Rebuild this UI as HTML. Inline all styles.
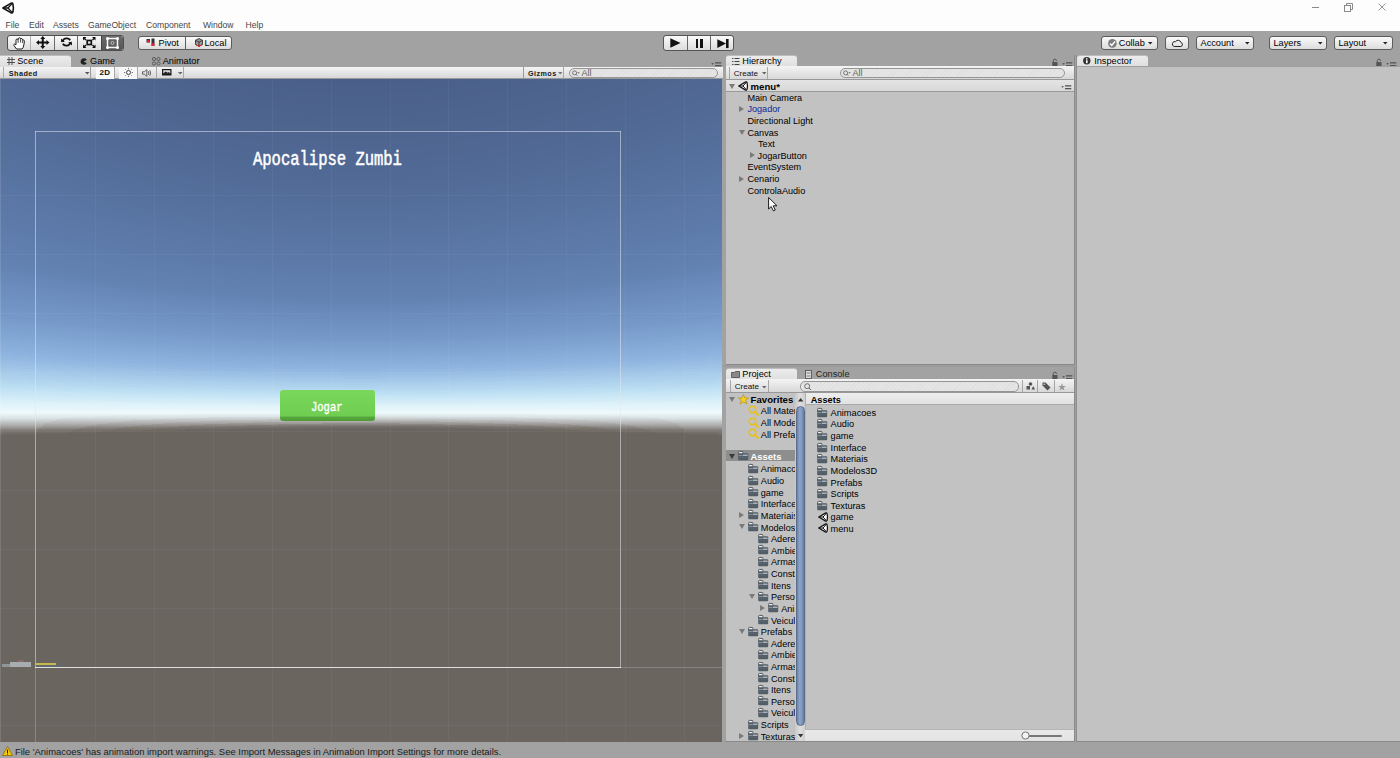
<!DOCTYPE html>
<html><head><meta charset="utf-8">
<style>
*{margin:0;padding:0;box-sizing:border-box}
html,body{width:1400px;height:758px;overflow:hidden;background:#a2a2a2;font-family:"Liberation Sans",sans-serif;font-size:9px;color:#000;position:relative}
.a{position:absolute}
svg.a{overflow:visible}
.t{position:absolute;white-space:nowrap}
.btn{position:absolute;border:1px solid #5c5c5c;border-radius:3px;background:linear-gradient(#fafafa,#dcdcdc)}
.tab{position:absolute;background:linear-gradient(#ececec,#dedede);border-radius:3px 3px 0 0;border-top:1px solid #bcbcbc}
.strip{position:absolute;background:linear-gradient(#f4f4f4,#d8d8d8);border-bottom:1px solid #989898}
.panel{position:absolute;background:#c2c2c2}
</style></head><body>

<div class="a" style="left:0px;top:0px;width:1400px;height:31px;background:#fdfdfd"></div>
<svg class="a" style="left:2px;top:2px" width="12" height="12" viewBox="0 0 10 10"><path d="M0.8 5 L7.3 1.1 Q8.7 0.4 9.1 1.8 Q9.9 5 9.1 8.2 Q8.7 9.6 7.3 8.9 Z" fill="#fff" stroke="#151515" stroke-width="1.35" stroke-linejoin="round"/><path d="M5 5 L8.4 1.3 M5 5 L8.4 8.7 M5 5 H0.8" stroke="#151515" stroke-width="1.05"/></svg>
<div class="t" style="left:5.50px;top:20.62px;font-size:8.6px;line-height:8.6px;color:#464646;font-weight:400;">File</div>
<div class="t" style="left:29.00px;top:20.62px;font-size:8.6px;line-height:8.6px;color:#464646;font-weight:400;">Edit</div>
<div class="t" style="left:53.00px;top:20.62px;font-size:8.6px;line-height:8.6px;color:#464646;font-weight:400;">Assets</div>
<div class="t" style="left:88.00px;top:20.62px;font-size:8.6px;line-height:8.6px;color:#464646;font-weight:400;">GameObject</div>
<div class="t" style="left:146.00px;top:20.62px;font-size:8.6px;line-height:8.6px;color:#464646;font-weight:400;">Component</div>
<div class="t" style="left:203.00px;top:20.62px;font-size:8.6px;line-height:8.6px;color:#464646;font-weight:400;">Window</div>
<div class="t" style="left:245.50px;top:20.62px;font-size:8.6px;line-height:8.6px;color:#464646;font-weight:400;">Help</div>
<div class="a" style="left:1312px;top:7px;width:7px;height:1px;background:#8a8a8a"></div>
<svg class="a" style="left:1343px;top:3px" width="10" height="9" viewBox="0 0 10 9"><rect x="1.5" y="2.5" width="6" height="6" fill="none" stroke="#8a8a8a" stroke-width="1"/><path d="M3.5 2.5 V0.5 H9.5 V6.5 H7.5" fill="none" stroke="#8a8a8a" stroke-width="1"/></svg>
<svg class="a" style="left:1378px;top:3px" width="8" height="8" viewBox="0 0 8 8"><path d="M0.5 0.5 L7.5 7.5 M7.5 0.5 L0.5 7.5" stroke="#8a8a8a" stroke-width="0.9"/></svg>
<div class="btn" style="left:7px;top:35px;width:117px;height:16px;border-color:#4e4e4e"></div>
<div class="a" style="left:101px;top:36px;width:22px;height:14px;background:linear-gradient(#6a6a6a,#565656);border-radius:0 2px 2px 0"></div>
<div class="a" style="left:30px;top:36px;width:1px;height:14px;background:#b0b0b0"></div>
<div class="a" style="left:54px;top:36px;width:1px;height:14px;background:#6a6a6a"></div>
<div class="a" style="left:77px;top:36px;width:1px;height:14px;background:#6a6a6a"></div>
<div class="a" style="left:101px;top:36px;width:1px;height:14px;background:#444"></div>
<svg class="a" style="left:12.5px;top:36.8px" width="13" height="12.5" viewBox="0 0 13 12.5"><path d="M3.5 12 L1 8.5 Q0.4 7.4 1.4 7.1 Q2.2 7 3 7.8 L3 3.2 Q3 2 4.1 2 Q5 2 5.1 2.9 Q5.2 0.8 6.4 0.8 Q7.6 0.8 7.6 2.2 Q7.9 1.4 8.8 1.6 Q9.8 1.9 9.7 3.1 Q10.1 2.8 10.8 3.1 Q11.6 3.6 11.4 4.8 L10.6 9 Q10.2 11 9 12 Z" fill="#fff" stroke="#111" stroke-width="0.95" stroke-linejoin="round"/><path d="M5.1 3 V5.8 M7.6 2.3 V5.6 M9.7 3.2 V6" stroke="#111" stroke-width="0.8"/></svg>
<svg class="a" style="left:35.8px;top:36.3px" width="13.5" height="13" viewBox="0 0 13.5 13"><path d="M6.75 2 V11 M2 6.5 H11.5" stroke="#111" stroke-width="2"/><path d="M6.75 0 L9.3 3 H4.2 Z M6.75 13 L9.3 10 H4.2 Z M0 6.5 L3 4 V9 Z M13.5 6.5 L10.5 4 V9 Z" fill="#111"/></svg>
<svg class="a" style="left:61px;top:37px" width="11" height="10" viewBox="0 0 11 10"><path d="M1.8 4 A4 3.6 0 0 1 9.2 3.2" fill="none" stroke="#111" stroke-width="1.8"/><path d="M0 1.5 L3.8 4.8 L0.2 5.2 Z" fill="#111"/><path d="M9.2 6 A4 3.6 0 0 1 1.8 6.8" fill="none" stroke="#111" stroke-width="1.8"/><path d="M11 8.5 L7.2 5.2 L10.8 4.8 Z" fill="#111"/></svg>
<svg class="a" style="left:83px;top:37px" width="12.5" height="11" viewBox="0 0 12.5 11"><rect x="4.2" y="3.5" width="4.1" height="4" fill="none" stroke="#111" stroke-width="1.7"/><path d="M0.7 0.7 L3 3 M11.8 0.7 L9.5 3 M0.7 10.3 L3 8 M11.8 10.3 L9.5 8" stroke="#111" stroke-width="1.3"/><path d="M0 0 H3.5 L0 3.5 Z M12.5 0 H9 L12.5 3.5 Z M0 11 H3.5 L0 7.5 Z M12.5 11 H9 L12.5 7.5 Z" fill="#111"/></svg>
<svg class="a" style="left:106px;top:36.5px" width="13" height="12" viewBox="0 0 13 12"><rect x="1.5" y="1.5" width="10" height="9" fill="none" stroke="#f6f6f6" stroke-width="1.5"/><circle cx="1.5" cy="1.5" r="1.5" fill="#fff"/><circle cx="11.5" cy="1.5" r="1.5" fill="#fff"/><circle cx="1.5" cy="10.5" r="1.5" fill="#fff"/><circle cx="11.5" cy="10.5" r="1.5" fill="#fff"/><circle cx="6.5" cy="6" r="1.5" fill="none" stroke="#d0d0d0" stroke-width="0.8"/></svg>
<div class="btn" style="left:138px;top:36px;width:94px;height:14px"></div>
<div class="a" style="left:185px;top:37px;width:1px;height:12px;background:#5c5c5c"></div>
<svg class="a" style="left:146px;top:38px" width="10" height="9" viewBox="0 0 10 9"><rect x="0.5" y="1" width="3.5" height="3.5" fill="#333"/><circle cx="2.2" cy="3.2" r="1.3" fill="#e23"/><rect x="5.5" y="0.5" width="3" height="7.5" fill="#333"/><circle cx="7" cy="6.5" r="1.5" fill="#e23"/></svg>
<div class="t" style="left:158.50px;top:38.91px;font-size:9.2px;line-height:9.2px;color:#000;font-weight:400;">Pivot</div>
<svg class="a" style="left:194.5px;top:37.5px" width="8" height="9" viewBox="0 0 8 9"><path d="M4 0.5 L7.5 2.3 V6.5 L4 8.4 L0.5 6.5 V2.3 Z" fill="#999" stroke="#333" stroke-width="0.9"/><path d="M0.5 2.3 L4 4.2 L7.5 2.3 M4 4.2 V8.4" stroke="#333" stroke-width="0.9" fill="none"/><path d="M0.8 6.6 L4 8.3 L7.2 6.6" stroke="#d22" stroke-width="1" fill="none"/></svg>
<div class="t" style="left:204.50px;top:38.91px;font-size:9.2px;line-height:9.2px;color:#000;font-weight:400;">Local</div>
<div class="btn" style="left:663px;top:35px;width:71px;height:16px;border-color:#555"></div>
<div class="a" style="left:687px;top:36px;width:1px;height:14px;background:#666"></div>
<div class="a" style="left:710px;top:36px;width:1px;height:14px;background:#666"></div>
<svg class="a" style="left:670px;top:38px" width="11" height="10" viewBox="0 0 11 10"><path d="M0.3 0.2 L10.6 5 L0.3 9.8 Z" fill="#111"/></svg>
<div class="a" style="left:695.7px;top:38.6px;width:2.6px;height:9.3px;background:#111"></div>
<div class="a" style="left:700px;top:38.6px;width:2.6px;height:9.3px;background:#111"></div>
<svg class="a" style="left:716.5px;top:38.8px" width="12" height="9.2" viewBox="0 0 12 9.2"><path d="M0.3 0.2 L9 4.6 L0.3 9 Z" fill="#111"/><rect x="9" y="0" width="2.6" height="9.1" fill="#111"/></svg>
<div class="btn" style="left:1101px;top:36px;width:57px;height:14px"></div>
<svg class="a" style="left:1107.5px;top:38.6px" width="9" height="9" viewBox="0 0 9 9"><circle cx="4.4" cy="4.4" r="4.3" fill="#7c7c7c"/><path d="M2 4.5 L3.8 6.4 L7 2.6" fill="none" stroke="#fff" stroke-width="1.5"/></svg>
<div class="t" style="left:1118.80px;top:39.01px;font-size:9.2px;line-height:9.2px;color:#000;font-weight:400;">Collab</div>
<svg class="a" style="left:1148.3px;top:42.2px" width="5" height="3" viewBox="0 0 5 3"><path d="M0 0 H4.5 L2.25 2.6 Z" fill="#222"/></svg>
<div class="btn" style="left:1165px;top:36px;width:24px;height:14px"></div>
<svg class="a" style="left:1171.5px;top:38.8px" width="11" height="8" viewBox="0 0 11 8"><path d="M2.2 7.5 H8.8 A2 2 0 0 0 9 3.6 A3 3 0 0 0 3.6 2.6 A2.4 2.4 0 0 0 2.2 7.5 Z" fill="none" stroke="#222" stroke-width="1"/></svg>
<div class="btn" style="left:1196px;top:36px;width:58px;height:14px"></div>
<div class="t" style="left:1200.50px;top:39.01px;font-size:9.2px;line-height:9.2px;color:#000;font-weight:400;">Account</div>
<svg class="a" style="left:1244.5px;top:42.2px" width="5" height="3" viewBox="0 0 5 3"><path d="M0 0 H4.5 L2.25 2.6 Z" fill="#222"/></svg>
<div class="btn" style="left:1269px;top:36px;width:58px;height:14px"></div>
<div class="t" style="left:1273.50px;top:39.01px;font-size:9.2px;line-height:9.2px;color:#000;font-weight:400;">Layers</div>
<svg class="a" style="left:1317.5px;top:42.2px" width="5" height="3" viewBox="0 0 5 3"><path d="M0 0 H4.5 L2.25 2.6 Z" fill="#222"/></svg>
<div class="btn" style="left:1334px;top:36px;width:59px;height:14px"></div>
<div class="t" style="left:1338.50px;top:39.01px;font-size:9.2px;line-height:9.2px;color:#000;font-weight:400;">Layout</div>
<svg class="a" style="left:1383px;top:42.2px" width="5" height="3" viewBox="0 0 5 3"><path d="M0 0 H4.5 L2.25 2.6 Z" fill="#222"/></svg>
<div class="tab" style="left:0px;top:55px;width:71px;height:12px;border-radius:0 3px 0 0"></div>
<svg class="a" style="left:7px;top:57px" width="8" height="8" viewBox="0 0 8 8"><path d="M2 0 V8 M5 0 V8 M0 2.5 H8 M0 5.5 H8" stroke="#444" stroke-width="0.9"/></svg>
<div class="t" style="left:17.20px;top:57.11px;font-size:9.2px;line-height:9.2px;color:#000;font-weight:400;">Scene</div>
<svg class="a" style="left:79.5px;top:58px" width="7" height="7" viewBox="0 0 7 7"><path d="M6.8 2 A3.3 3.3 0 1 0 6.8 5 L3.5 3.5 Z" fill="#222"/></svg>
<div class="t" style="left:90.00px;top:57.11px;font-size:9.2px;line-height:9.2px;color:#000;font-weight:400;">Game</div>
<svg class="a" style="left:151.5px;top:57px" width="9" height="9" viewBox="0 0 9 9"><circle cx="2" cy="2" r="1.6" fill="none" stroke="#555" stroke-width="0.9"/><circle cx="6.5" cy="2" r="1.6" fill="none" stroke="#555" stroke-width="0.9"/><circle cx="2" cy="6.5" r="1.6" fill="none" stroke="#555" stroke-width="0.9"/><circle cx="6.5" cy="6.5" r="1.6" fill="none" stroke="#555" stroke-width="0.9"/></svg>
<div class="t" style="left:162.70px;top:57.11px;font-size:9.2px;line-height:9.2px;color:#000;font-weight:400;">Animator</div>
<svg class="a" style="left:711px;top:61.5px" width="11" height="5" viewBox="0 0 11 5"><path d="M0.3 1.2 H2.9 L1.6 2.7 Z" fill="#444"/><rect x="4" y="0.2" width="6.3" height="1.3" fill="#555"/><rect x="4" y="3" width="6.3" height="1.3" fill="#555"/></svg>
<div class="strip" style="left:0px;top:67px;width:723px;height:12px"></div>
<div class="a" style="left:3px;top:67px;width:1px;height:12px;background:#aaa"></div>
<div class="a" style="left:90px;top:67px;width:1px;height:12px;background:#9a9a9a"></div>
<div class="a" style="left:96px;top:67px;width:18px;height:12px;background:#fafafa"></div>
<div class="a" style="left:114px;top:67px;width:1px;height:12px;background:#a8a8a8"></div>
<div class="a" style="left:119px;top:67px;width:18px;height:12px;background:#f7f7f7"></div>
<div class="a" style="left:137px;top:67px;width:1px;height:12px;background:#a8a8a8"></div>
<div class="a" style="left:156px;top:67px;width:1px;height:12px;background:#a8a8a8"></div>
<div class="a" style="left:183px;top:67px;width:1px;height:12px;background:#a8a8a8"></div>
<div class="a" style="left:523px;top:67px;width:1px;height:12px;background:#9a9a9a"></div>
<div class="a" style="left:563px;top:67px;width:1px;height:12px;background:#a8a8a8"></div>
<div class="t" style="left:8.70px;top:70.32px;font-size:7.3px;line-height:7.3px;color:#1a1a1a;font-weight:700;letter-spacing:0.45px">Shaded</div>
<svg class="a" style="left:85px;top:71.8px" width="5" height="3" viewBox="0 0 5 3"><path d="M0 0 H4.5 L2.25 2.6 Z" fill="#555"/></svg>
<div class="t" style="left:99.50px;top:69.13px;font-size:8.0px;line-height:8.0px;color:#111;font-weight:700;letter-spacing:0.3px">2D</div>
<svg class="a" style="left:124px;top:68px" width="9" height="9" viewBox="0 0 9 9"><circle cx="4.5" cy="4.5" r="2" fill="none" stroke="#444" stroke-width="1"/><path d="M4.5 0 V1.3 M4.5 7.7 V9 M0 4.5 H1.3 M7.7 4.5 H9 M1.3 1.3 L2.1 2.1 M6.9 6.9 L7.7 7.7 M7.7 1.3 L6.9 2.1 M1.3 7.7 L2.1 6.9" stroke="#555" stroke-width="0.8"/></svg>
<svg class="a" style="left:141.5px;top:68.5px" width="10" height="8" viewBox="0 0 10 8"><path d="M0.5 2.8 H2.3 L4.8 0.6 V7.4 L2.3 5.2 H0.5 Z" fill="none" stroke="#555" stroke-width="0.9"/><path d="M6.3 2.2 Q7.3 4 6.3 5.8 M7.8 1.2 Q9.4 4 7.8 6.8" fill="none" stroke="#555" stroke-width="0.9"/></svg>
<svg class="a" style="left:162px;top:69.3px" width="9.5" height="6.5" viewBox="0 0 9.5 6.5"><rect x="0" y="0" width="9.5" height="6.5" fill="#1a1a1a"/><rect x="1.2" y="1.2" width="7.1" height="3" fill="#d8d8d8"/><path d="M1.2 4.4 L3.6 2.4 L5.6 3.8 L6.8 3 L8.3 4.4 Z" fill="#1a1a1a"/></svg>
<svg class="a" style="left:177.5px;top:72px" width="5" height="3" viewBox="0 0 5 3"><path d="M0 0 H4.5 L2.25 2.6 Z" fill="#666"/></svg>
<div class="t" style="left:528.00px;top:70.41px;font-size:7.2px;line-height:7.2px;color:#1a1a1a;font-weight:700;letter-spacing:0.45px">Gizmos</div>
<svg class="a" style="left:557.5px;top:71.8px" width="5" height="3" viewBox="0 0 5 3"><path d="M0 0 H4.5 L2.25 2.6 Z" fill="#777"/></svg>
<div class="a" style="left:569px;top:68px;width:149px;height:10px;border:1px solid #8c8c8c;border-radius:5px;background:repeating-linear-gradient(135deg,#e5e5e5 0 2px,#dfdfdf 2px 3px);border-color:#959595"></div>
<svg class="a" style="left:572.3px;top:69.8px" width="9" height="7" viewBox="0 0 9 7"><circle cx="2.6" cy="2.9" r="2" fill="none" stroke="#6a6a6a" stroke-width="0.9"/><path d="M4 4.3 L5.3 5.8" stroke="#6a6a6a" stroke-width="1"/><path d="M5.2 2.2 H7.8 L6.5 3.8 Z" fill="#6a6a6a"/></svg>
<div class="t" style="left:581.50px;top:68.88px;font-size:9px;line-height:9px;color:#5e5e5e;font-weight:400;">All</div>
<div class="a" style="left:0;top:79px;width:722px;height:663px;overflow:hidden">
<svg class="a" style="left:0;top:0" width="722" height="663" shape-rendering="crispEdges"><rect x="0" y="0" width="722" height="663" fill="#4a608a"/><path d="M0 663 L0 -113.0 L38 -93.7 L76 -75.7 L114 -59.3 L152 -44.7 L190 -32.0 L228 -21.6 L266 -13.6 L304 -8.1 L342 -5.3 L380 -5.3 L418 -8.1 L456 -13.6 L494 -21.6 L532 -32.0 L570 -44.7 L608 -59.3 L646 -75.7 L684 -93.7 L722 -113.0 L722 663Z" fill="#4a608a"/><path d="M0 663 L0 -109.1 L38 -89.9 L76 -72.1 L114 -55.8 L152 -41.3 L190 -28.8 L228 -18.4 L266 -10.5 L304 -5.1 L342 -2.3 L380 -2.3 L418 -5.1 L456 -10.5 L494 -18.4 L532 -28.8 L570 -41.3 L608 -55.8 L646 -72.1 L684 -89.9 L722 -109.1 L722 663Z" fill="#4a608a"/><path d="M0 663 L0 -105.1 L38 -86.1 L76 -68.4 L114 -52.3 L152 -38.0 L190 -25.5 L228 -15.3 L266 -7.4 L304 -2.1 L342 0.7 L380 0.7 L418 -2.1 L456 -7.4 L494 -15.3 L532 -25.5 L570 -38.0 L608 -52.3 L646 -68.4 L684 -86.1 L722 -105.1 L722 663Z" fill="#4a608a"/><path d="M0 663 L0 -101.1 L38 -82.3 L76 -64.8 L114 -48.8 L152 -34.6 L190 -22.3 L228 -12.2 L266 -4.3 L304 1.0 L342 3.7 L380 3.7 L418 1.0 L456 -4.3 L494 -12.2 L532 -22.3 L570 -34.6 L608 -48.8 L646 -64.8 L684 -82.3 L722 -101.1 L722 663Z" fill="#4a608a"/><path d="M0 663 L0 -97.2 L38 -78.5 L76 -61.2 L114 -45.4 L152 -31.2 L190 -19.1 L228 -9.0 L266 -1.3 L304 4.0 L342 6.7 L380 6.7 L418 4.0 L456 -1.3 L494 -9.0 L532 -19.1 L570 -31.2 L608 -45.4 L646 -61.2 L684 -78.5 L722 -97.2 L722 663Z" fill="#4b618b"/><path d="M0 663 L0 -93.2 L38 -74.7 L76 -57.6 L114 -41.9 L152 -27.9 L190 -15.8 L228 -5.9 L266 1.8 L304 7.0 L342 9.7 L380 9.7 L418 7.0 L456 1.8 L494 -5.9 L532 -15.8 L570 -27.9 L608 -41.9 L646 -57.6 L684 -74.7 L722 -93.2 L722 663Z" fill="#4b618b"/><path d="M0 663 L0 -89.3 L38 -70.9 L76 -53.9 L114 -38.4 L152 -24.5 L190 -12.6 L228 -2.7 L266 4.9 L304 10.1 L342 12.7 L380 12.7 L418 10.1 L456 4.9 L494 -2.7 L532 -12.6 L570 -24.5 L608 -38.4 L646 -53.9 L684 -70.9 L722 -89.3 L722 663Z" fill="#4b618c"/><path d="M0 663 L0 -85.3 L38 -67.2 L76 -50.3 L114 -34.9 L152 -21.2 L190 -9.3 L228 0.4 L266 8.0 L304 13.1 L342 15.7 L380 15.7 L418 13.1 L456 8.0 L494 0.4 L532 -9.3 L570 -21.2 L608 -34.9 L646 -50.3 L684 -67.2 L722 -85.3 L722 663Z" fill="#4b628c"/><path d="M0 663 L0 -81.4 L38 -63.4 L76 -46.7 L114 -31.4 L152 -17.8 L190 -6.1 L228 3.6 L266 11.0 L304 16.1 L342 18.7 L380 18.7 L418 16.1 L456 11.0 L494 3.6 L532 -6.1 L570 -17.8 L608 -31.4 L646 -46.7 L684 -63.4 L722 -81.4 L722 663Z" fill="#4b628c"/><path d="M0 663 L0 -77.4 L38 -59.6 L76 -43.1 L114 -28.0 L152 -14.5 L190 -2.9 L228 6.7 L266 14.1 L304 19.1 L342 21.7 L380 21.7 L418 19.1 L456 14.1 L494 6.7 L532 -2.9 L570 -14.5 L608 -28.0 L646 -43.1 L684 -59.6 L722 -77.4 L722 663Z" fill="#4c628d"/><path d="M0 663 L0 -73.5 L38 -55.8 L76 -39.4 L114 -24.5 L152 -11.1 L190 0.4 L228 9.9 L266 17.2 L304 22.2 L342 24.7 L380 24.7 L418 22.2 L456 17.2 L494 9.9 L532 0.4 L570 -11.1 L608 -24.5 L646 -39.4 L684 -55.8 L722 -73.5 L722 663Z" fill="#4c628d"/><path d="M0 663 L0 -69.5 L38 -52.0 L76 -35.8 L114 -21.0 L152 -7.8 L190 3.6 L228 13.0 L266 20.3 L304 25.2 L342 27.7 L380 27.7 L418 25.2 L456 20.3 L494 13.0 L532 3.6 L570 -7.8 L608 -21.0 L646 -35.8 L684 -52.0 L722 -69.5 L722 663Z" fill="#4c638d"/><path d="M0 663 L0 -65.5 L38 -48.2 L76 -32.2 L114 -17.5 L152 -4.4 L190 6.8 L228 16.2 L266 23.3 L304 28.2 L342 30.7 L380 30.7 L418 28.2 L456 23.3 L494 16.2 L532 6.8 L570 -4.4 L608 -17.5 L646 -32.2 L684 -48.2 L722 -65.5 L722 663Z" fill="#4c638e"/><path d="M0 663 L0 -61.6 L38 -44.5 L76 -28.5 L114 -14.0 L152 -1.1 L190 10.1 L228 19.3 L266 26.4 L304 31.2 L342 33.7 L380 33.7 L418 31.2 L456 26.4 L494 19.3 L532 10.1 L570 -1.1 L608 -14.0 L646 -28.5 L684 -44.5 L722 -61.6 L722 663Z" fill="#4d638e"/><path d="M0 663 L0 -57.6 L38 -40.7 L76 -24.9 L114 -10.6 L152 2.3 L190 13.3 L228 22.5 L266 29.5 L304 34.3 L342 36.7 L380 36.7 L418 34.3 L456 29.5 L494 22.5 L532 13.3 L570 2.3 L608 -10.6 L646 -24.9 L684 -40.7 L722 -57.6 L722 663Z" fill="#4d648e"/><path d="M0 663 L0 -53.7 L38 -36.9 L76 -21.3 L114 -7.1 L152 5.6 L190 16.6 L228 25.6 L266 32.6 L304 37.3 L342 39.7 L380 39.7 L418 37.3 L456 32.6 L494 25.6 L532 16.6 L570 5.6 L608 -7.1 L646 -21.3 L684 -36.9 L722 -53.7 L722 663Z" fill="#4d648f"/><path d="M0 663 L0 -49.7 L38 -33.1 L76 -17.7 L114 -3.6 L152 9.0 L190 19.8 L228 28.8 L266 35.6 L304 40.3 L342 42.7 L380 42.7 L418 40.3 L456 35.6 L494 28.8 L532 19.8 L570 9.0 L608 -3.6 L646 -17.7 L684 -33.1 L722 -49.7 L722 663Z" fill="#4d648f"/><path d="M0 663 L0 -45.8 L38 -29.3 L76 -14.0 L114 -0.1 L152 12.3 L190 23.0 L228 31.9 L266 38.7 L304 43.4 L342 45.7 L380 45.7 L418 43.4 L456 38.7 L494 31.9 L532 23.0 L570 12.3 L608 -0.1 L646 -14.0 L684 -29.3 L722 -45.8 L722 663Z" fill="#4d648f"/><path d="M0 663 L0 -41.8 L38 -25.5 L76 -10.4 L114 3.4 L152 15.7 L190 26.3 L228 35.1 L266 41.8 L304 46.4 L342 48.7 L380 48.7 L418 46.4 L456 41.8 L494 35.1 L532 26.3 L570 15.7 L608 3.4 L646 -10.4 L684 -25.5 L722 -41.8 L722 663Z" fill="#4e6590"/><path d="M0 663 L0 -37.9 L38 -21.7 L76 -6.8 L114 6.8 L152 19.0 L190 29.5 L228 38.2 L266 44.9 L304 49.4 L342 51.7 L380 51.7 L418 49.4 L456 44.9 L494 38.2 L532 29.5 L570 19.0 L608 6.8 L646 -6.8 L684 -21.7 L722 -37.9 L722 663Z" fill="#4e6590"/><path d="M0 663 L0 -33.9 L38 -18.0 L76 -3.2 L114 10.3 L152 22.4 L190 32.8 L228 41.3 L266 48.0 L304 52.4 L342 54.7 L380 54.7 L418 52.4 L456 48.0 L494 41.3 L532 32.8 L570 22.4 L608 10.3 L646 -3.2 L684 -18.0 L722 -33.9 L722 663Z" fill="#4e6590"/><path d="M0 663 L0 -29.9 L38 -14.2 L76 0.5 L114 13.8 L152 25.7 L190 36.0 L228 44.5 L266 51.0 L304 55.5 L342 57.7 L380 57.7 L418 55.5 L456 51.0 L494 44.5 L532 36.0 L570 25.7 L608 13.8 L646 0.5 L684 -14.2 L722 -29.9 L722 663Z" fill="#4e6591"/><path d="M0 663 L0 -26.0 L38 -10.4 L76 4.1 L114 17.3 L152 29.1 L190 39.2 L228 47.6 L266 54.1 L304 58.5 L342 60.7 L380 60.7 L418 58.5 L456 54.1 L494 47.6 L532 39.2 L570 29.1 L608 17.3 L646 4.1 L684 -10.4 L722 -26.0 L722 663Z" fill="#4e6691"/><path d="M0 663 L0 -22.0 L38 -6.6 L76 7.7 L114 20.8 L152 32.4 L190 42.5 L228 50.8 L266 57.2 L304 61.5 L342 63.7 L380 63.7 L418 61.5 L456 57.2 L494 50.8 L532 42.5 L570 32.4 L608 20.8 L646 7.7 L684 -6.6 L722 -22.0 L722 663Z" fill="#4f6691"/><path d="M0 663 L0 -18.1 L38 -2.8 L76 11.3 L114 24.3 L152 35.8 L190 45.7 L228 53.9 L266 60.3 L304 64.6 L342 66.7 L380 66.7 L418 64.6 L456 60.3 L494 53.9 L532 45.7 L570 35.8 L608 24.3 L646 11.3 L684 -2.8 L722 -18.1 L722 663Z" fill="#4f6692"/><path d="M0 663 L0 -14.1 L38 1.0 L76 15.0 L114 27.7 L152 39.1 L190 49.0 L228 57.1 L266 63.3 L304 67.6 L342 69.7 L380 69.7 L418 67.6 L456 63.3 L494 57.1 L532 49.0 L570 39.1 L608 27.7 L646 15.0 L684 1.0 L722 -14.1 L722 663Z" fill="#4f6792"/><path d="M0 663 L0 -10.2 L38 4.7 L76 18.6 L114 31.2 L152 42.5 L190 52.2 L228 60.2 L266 66.4 L304 70.6 L342 72.7 L380 72.7 L418 70.6 L456 66.4 L494 60.2 L532 52.2 L570 42.5 L608 31.2 L646 18.6 L684 4.7 L722 -10.2 L722 663Z" fill="#4f6792"/><path d="M0 663 L0 -6.2 L38 8.5 L76 22.2 L114 34.7 L152 45.8 L190 55.4 L228 63.4 L266 69.5 L304 73.6 L342 75.7 L380 75.7 L418 73.6 L456 69.5 L494 63.4 L532 55.4 L570 45.8 L608 34.7 L646 22.2 L684 8.5 L722 -6.2 L722 663Z" fill="#506793"/><path d="M0 663 L0 -2.3 L38 12.3 L76 25.8 L114 38.2 L152 49.2 L190 58.7 L228 66.5 L266 72.6 L304 76.7 L342 78.7 L380 78.7 L418 76.7 L456 72.6 L494 66.5 L532 58.7 L570 49.2 L608 38.2 L646 25.8 L684 12.3 L722 -2.3 L722 663Z" fill="#506793"/><path d="M0 663 L0 1.7 L38 16.1 L76 29.5 L114 41.7 L152 52.5 L190 61.9 L228 69.7 L266 75.6 L304 79.7 L342 81.7 L380 81.7 L418 79.7 L456 75.6 L494 69.7 L532 61.9 L570 52.5 L608 41.7 L646 29.5 L684 16.1 L722 1.7 L722 663Z" fill="#506893"/><path d="M0 663 L0 5.7 L38 19.9 L76 33.1 L114 45.1 L152 55.9 L190 65.2 L228 72.8 L266 78.7 L304 82.7 L342 84.7 L380 84.7 L418 82.7 L456 78.7 L494 72.8 L532 65.2 L570 55.9 L608 45.1 L646 33.1 L684 19.9 L722 5.7 L722 663Z" fill="#506894"/><path d="M0 663 L0 9.6 L38 23.7 L76 36.7 L114 48.6 L152 59.2 L190 68.4 L228 76.0 L266 81.8 L304 85.7 L342 87.7 L380 87.7 L418 85.7 L456 81.8 L494 76.0 L532 68.4 L570 59.2 L608 48.6 L646 36.7 L684 23.7 L722 9.6 L722 663Z" fill="#506894"/><path d="M0 663 L0 13.6 L38 27.5 L76 40.3 L114 52.1 L152 62.6 L190 71.6 L228 79.1 L266 84.9 L304 88.8 L342 90.8 L380 90.8 L418 88.8 L456 84.9 L494 79.1 L532 71.6 L570 62.6 L608 52.1 L646 40.3 L684 27.5 L722 13.6 L722 663Z" fill="#516995"/><path d="M0 663 L0 17.5 L38 31.2 L76 44.0 L114 55.6 L152 65.9 L190 74.9 L228 82.3 L266 87.9 L304 91.8 L342 93.8 L380 93.8 L418 91.8 L456 87.9 L494 82.3 L532 74.9 L570 65.9 L608 55.6 L646 44.0 L684 31.2 L722 17.5 L722 663Z" fill="#516995"/><path d="M0 663 L0 21.5 L38 35.0 L76 47.6 L114 59.1 L152 69.3 L190 78.1 L228 85.4 L266 91.0 L304 94.8 L342 96.8 L380 96.8 L418 94.8 L456 91.0 L494 85.4 L532 78.1 L570 69.3 L608 59.1 L646 47.6 L684 35.0 L722 21.5 L722 663Z" fill="#516995"/><path d="M0 663 L0 25.4 L38 38.8 L76 51.2 L114 62.5 L152 72.6 L190 81.3 L228 88.5 L266 94.1 L304 97.9 L342 99.8 L380 99.8 L418 97.9 L456 94.1 L494 88.5 L532 81.3 L570 72.6 L608 62.5 L646 51.2 L684 38.8 L722 25.4 L722 663Z" fill="#526a96"/><path d="M0 663 L0 29.4 L38 42.6 L76 54.8 L114 66.0 L152 76.0 L190 84.6 L228 91.7 L266 97.2 L304 100.9 L342 102.8 L380 102.8 L418 100.9 L456 97.2 L494 91.7 L532 84.6 L570 76.0 L608 66.0 L646 54.8 L684 42.6 L722 29.4 L722 663Z" fill="#526a97"/><path d="M0 663 L0 33.4 L38 46.4 L76 58.5 L114 69.5 L152 79.3 L190 87.8 L228 94.8 L266 100.2 L304 103.9 L342 105.8 L380 105.8 L418 103.9 L456 100.2 L494 94.8 L532 87.8 L570 79.3 L608 69.5 L646 58.5 L684 46.4 L722 33.4 L722 663Z" fill="#526b97"/><path d="M0 663 L0 37.3 L38 50.2 L76 62.1 L114 73.0 L152 82.7 L190 91.1 L228 98.0 L266 103.3 L304 106.9 L342 108.8 L380 108.8 L418 106.9 L456 103.3 L494 98.0 L532 91.1 L570 82.7 L608 73.0 L646 62.1 L684 50.2 L722 37.3 L722 663Z" fill="#536b98"/><path d="M0 663 L0 41.3 L38 53.9 L76 65.7 L114 76.5 L152 86.0 L190 94.3 L228 101.1 L266 106.4 L304 110.0 L342 111.8 L380 111.8 L418 110.0 L456 106.4 L494 101.1 L532 94.3 L570 86.0 L608 76.5 L646 65.7 L684 53.9 L722 41.3 L722 663Z" fill="#536c98"/><path d="M0 663 L0 45.2 L38 57.7 L76 69.3 L114 79.9 L152 89.4 L190 97.5 L228 104.3 L266 109.5 L304 113.0 L342 114.8 L380 114.8 L418 113.0 L456 109.5 L494 104.3 L532 97.5 L570 89.4 L608 79.9 L646 69.3 L684 57.7 L722 45.2 L722 663Z" fill="#536c99"/><path d="M0 663 L0 49.2 L38 61.5 L76 73.0 L114 83.4 L152 92.7 L190 100.8 L228 107.4 L266 112.5 L304 116.0 L342 117.8 L380 117.8 L418 116.0 L456 112.5 L494 107.4 L532 100.8 L570 92.7 L608 83.4 L646 73.0 L684 61.5 L722 49.2 L722 663Z" fill="#546d9a"/><path d="M0 663 L0 53.1 L38 65.3 L76 76.6 L114 86.9 L152 96.1 L190 104.0 L228 110.6 L266 115.6 L304 119.0 L342 120.8 L380 120.8 L418 119.0 L456 115.6 L494 110.6 L532 104.0 L570 96.1 L608 86.9 L646 76.6 L684 65.3 L722 53.1 L722 663Z" fill="#546e9a"/><path d="M0 663 L0 57.1 L38 69.1 L76 80.2 L114 90.4 L152 99.4 L190 107.3 L228 113.7 L266 118.7 L304 122.1 L342 123.8 L380 123.8 L418 122.1 L456 118.7 L494 113.7 L532 107.3 L570 99.4 L608 90.4 L646 80.2 L684 69.1 L722 57.1 L722 663Z" fill="#546e9b"/><path d="M0 663 L0 61.0 L38 72.9 L76 83.8 L114 93.9 L152 102.8 L190 110.5 L228 116.9 L266 121.8 L304 125.1 L342 126.8 L380 126.8 L418 125.1 L456 121.8 L494 116.9 L532 110.5 L570 102.8 L608 93.9 L646 83.8 L684 72.9 L722 61.0 L722 663Z" fill="#546f9b"/><path d="M0 663 L0 65.0 L38 76.6 L76 87.5 L114 97.3 L152 106.1 L190 113.7 L228 120.0 L266 124.8 L304 128.1 L342 129.8 L380 129.8 L418 128.1 L456 124.8 L494 120.0 L532 113.7 L570 106.1 L608 97.3 L646 87.5 L684 76.6 L722 65.0 L722 663Z" fill="#556f9c"/><path d="M0 663 L0 69.0 L38 80.4 L76 91.1 L114 100.8 L152 109.5 L190 117.0 L228 123.2 L266 127.9 L304 131.2 L342 132.8 L380 132.8 L418 131.2 L456 127.9 L494 123.2 L532 117.0 L570 109.5 L608 100.8 L646 91.1 L684 80.4 L722 69.0 L722 663Z" fill="#55709c"/><path d="M0 663 L0 72.9 L38 84.2 L76 94.7 L114 104.3 L152 112.8 L190 120.2 L228 126.3 L266 131.0 L304 134.2 L342 135.8 L380 135.8 L418 134.2 L456 131.0 L494 126.3 L532 120.2 L570 112.8 L608 104.3 L646 94.7 L684 84.2 L722 72.9 L722 663Z" fill="#55709d"/><path d="M0 663 L0 76.9 L38 88.0 L76 98.3 L114 107.8 L152 116.2 L190 123.5 L228 129.5 L266 134.1 L304 137.2 L342 138.8 L380 138.8 L418 137.2 L456 134.1 L494 129.5 L532 123.5 L570 116.2 L608 107.8 L646 98.3 L684 88.0 L722 76.9 L722 663Z" fill="#56719e"/><path d="M0 663 L0 80.8 L38 91.8 L76 102.0 L114 111.3 L152 119.5 L190 126.7 L228 132.6 L266 137.1 L304 140.2 L342 141.8 L380 141.8 L418 140.2 L456 137.1 L494 132.6 L532 126.7 L570 119.5 L608 111.3 L646 102.0 L684 91.8 L722 80.8 L722 663Z" fill="#56719e"/><path d="M0 663 L0 84.8 L38 95.6 L76 105.6 L114 114.7 L152 122.9 L190 129.9 L228 135.8 L266 140.2 L304 143.3 L342 144.8 L380 144.8 L418 143.3 L456 140.2 L494 135.8 L532 129.9 L570 122.9 L608 114.7 L646 105.6 L684 95.6 L722 84.8 L722 663Z" fill="#57729f"/><path d="M0 663 L0 88.7 L38 99.4 L76 109.2 L114 118.2 L152 126.2 L190 133.2 L228 138.9 L266 143.3 L304 146.3 L342 147.8 L380 147.8 L418 146.3 L456 143.3 L494 138.9 L532 133.2 L570 126.2 L608 118.2 L646 109.2 L684 99.4 L722 88.7 L722 663Z" fill="#5772a0"/><path d="M0 663 L0 92.7 L38 103.1 L76 112.8 L114 121.7 L152 129.6 L190 136.4 L228 142.0 L266 146.4 L304 149.3 L342 150.8 L380 150.8 L418 149.3 L456 146.4 L494 142.0 L532 136.4 L570 129.6 L608 121.7 L646 112.8 L684 103.1 L722 92.7 L722 663Z" fill="#5773a0"/><path d="M0 663 L0 96.6 L38 106.9 L76 116.5 L114 125.2 L152 132.9 L190 139.7 L228 145.2 L266 149.5 L304 152.3 L342 153.8 L380 153.8 L418 152.3 L456 149.5 L494 145.2 L532 139.7 L570 132.9 L608 125.2 L646 116.5 L684 106.9 L722 96.6 L722 663Z" fill="#5874a1"/><path d="M0 663 L0 100.6 L38 110.7 L76 120.1 L114 128.7 L152 136.3 L190 142.9 L228 148.3 L266 152.5 L304 155.4 L342 156.8 L380 156.8 L418 155.4 L456 152.5 L494 148.3 L532 142.9 L570 136.3 L608 128.7 L646 120.1 L684 110.7 L722 100.6 L722 663Z" fill="#5874a2"/><path d="M0 663 L0 104.6 L38 114.5 L76 123.7 L114 132.1 L152 139.6 L190 146.1 L228 151.5 L266 155.6 L304 158.4 L342 159.8 L380 159.8 L418 158.4 L456 155.6 L494 151.5 L532 146.1 L570 139.6 L608 132.1 L646 123.7 L684 114.5 L722 104.6 L722 663Z" fill="#5975a3"/><path d="M0 663 L0 108.5 L38 118.3 L76 127.3 L114 135.6 L152 143.0 L190 149.4 L228 154.6 L266 158.7 L304 161.4 L342 162.8 L380 162.8 L418 161.4 L456 158.7 L494 154.6 L532 149.4 L570 143.0 L608 135.6 L646 127.3 L684 118.3 L722 108.5 L722 663Z" fill="#5975a3"/><path d="M0 663 L0 112.5 L38 122.1 L76 131.0 L114 139.1 L152 146.3 L190 152.6 L228 157.8 L266 161.8 L304 164.5 L342 165.8 L380 165.8 L418 164.5 L456 161.8 L494 157.8 L532 152.6 L570 146.3 L608 139.1 L646 131.0 L684 122.1 L722 112.5 L722 663Z" fill="#5a76a4"/><path d="M0 663 L0 116.4 L38 125.8 L76 134.6 L114 142.6 L152 149.7 L190 155.8 L228 160.9 L266 164.8 L304 167.5 L342 168.8 L380 168.8 L418 167.5 L456 164.8 L494 160.9 L532 155.8 L570 149.7 L608 142.6 L646 134.6 L684 125.8 L722 116.4 L722 663Z" fill="#5a77a5"/><path d="M0 663 L0 120.4 L38 129.6 L76 138.2 L114 146.1 L152 153.1 L190 159.1 L228 164.1 L266 167.9 L304 170.5 L342 171.8 L380 171.8 L418 170.5 L456 167.9 L494 164.1 L532 159.1 L570 153.1 L608 146.1 L646 138.2 L684 129.6 L722 120.4 L722 663Z" fill="#5a77a6"/><path d="M0 663 L0 124.3 L38 133.4 L76 141.8 L114 149.5 L152 156.4 L190 162.3 L228 167.2 L266 171.0 L304 173.5 L342 174.8 L380 174.8 L418 173.5 L456 171.0 L494 167.2 L532 162.3 L570 156.4 L608 149.5 L646 141.8 L684 133.4 L722 124.3 L722 663Z" fill="#5b78a6"/><path d="M0 663 L0 128.3 L38 137.2 L76 145.5 L114 153.0 L152 159.8 L190 165.6 L228 170.4 L266 174.1 L304 176.6 L342 177.8 L380 177.8 L418 176.6 L456 174.1 L494 170.4 L532 165.6 L570 159.8 L608 153.0 L646 145.5 L684 137.2 L722 128.3 L722 663Z" fill="#5b79a7"/><path d="M0 663 L0 132.2 L38 141.0 L76 149.1 L114 156.5 L152 163.1 L190 168.8 L228 173.5 L266 177.1 L304 179.6 L342 180.8 L380 180.8 L418 179.6 L456 177.1 L494 173.5 L532 168.8 L570 163.1 L608 156.5 L646 149.1 L684 141.0 L722 132.2 L722 663Z" fill="#5c79a8"/><path d="M0 663 L0 136.2 L38 144.8 L76 152.7 L114 160.0 L152 166.5 L190 172.0 L228 176.7 L266 180.2 L304 182.6 L342 183.8 L380 183.8 L418 182.6 L456 180.2 L494 176.7 L532 172.0 L570 166.5 L608 160.0 L646 152.7 L684 144.8 L722 136.2 L722 663Z" fill="#5c7aa9"/><path d="M0 663 L0 140.2 L38 148.6 L76 156.4 L114 163.5 L152 169.8 L190 175.3 L228 179.8 L266 183.3 L304 185.7 L342 186.8 L380 186.8 L418 185.7 L456 183.3 L494 179.8 L532 175.3 L570 169.8 L608 163.5 L646 156.4 L684 148.6 L722 140.2 L722 663Z" fill="#5d7aa9"/><path d="M0 663 L0 144.1 L38 152.3 L76 160.0 L114 166.9 L152 173.2 L190 178.5 L228 183.0 L266 186.4 L304 188.7 L342 189.9 L380 189.9 L418 188.7 L456 186.4 L494 183.0 L532 178.5 L570 173.2 L608 166.9 L646 160.0 L684 152.3 L722 144.1 L722 663Z" fill="#5d7baa"/><path d="M0 663 L0 148.1 L38 156.1 L76 163.6 L114 170.4 L152 176.5 L190 181.8 L228 186.1 L266 189.4 L304 191.7 L342 192.9 L380 192.9 L418 191.7 L456 189.4 L494 186.1 L532 181.8 L570 176.5 L608 170.4 L646 163.6 L684 156.1 L722 148.1 L722 663Z" fill="#5e7cab"/><path d="M0 663 L0 152.0 L38 159.9 L76 167.2 L114 173.9 L152 179.9 L190 185.0 L228 189.2 L266 192.5 L304 194.7 L342 195.9 L380 195.9 L418 194.7 L456 192.5 L494 189.2 L532 185.0 L570 179.9 L608 173.9 L646 167.2 L684 159.9 L722 152.0 L722 663Z" fill="#5e7dac"/><path d="M0 663 L0 156.0 L38 163.7 L76 170.9 L114 177.4 L152 183.2 L190 188.2 L228 192.4 L266 195.6 L304 197.8 L342 198.9 L380 198.9 L418 197.8 L456 195.6 L494 192.4 L532 188.2 L570 183.2 L608 177.4 L646 170.9 L684 163.7 L722 156.0 L722 663Z" fill="#5f7dad"/><path d="M0 663 L0 159.9 L38 167.5 L76 174.5 L114 180.9 L152 186.6 L190 191.5 L228 195.5 L266 198.7 L304 200.8 L342 201.9 L380 201.9 L418 200.8 L456 198.7 L494 195.5 L532 191.5 L570 186.6 L608 180.9 L646 174.5 L684 167.5 L722 159.9 L722 663Z" fill="#5f7ead"/><path d="M0 663 L0 163.9 L38 171.3 L76 178.1 L114 184.3 L152 189.9 L190 194.7 L228 198.7 L266 201.7 L304 203.8 L342 204.9 L380 204.9 L418 203.8 L456 201.7 L494 198.7 L532 194.7 L570 189.9 L608 184.3 L646 178.1 L684 171.3 L722 163.9 L722 663Z" fill="#607fae"/><path d="M0 663 L0 167.9 L38 175.0 L76 181.7 L114 187.8 L152 193.3 L190 198.0 L228 201.8 L266 204.8 L304 206.8 L342 207.9 L380 207.9 L418 206.8 L456 204.8 L494 201.8 L532 198.0 L570 193.3 L608 187.8 L646 181.7 L684 175.0 L722 167.9 L722 663Z" fill="#6080af"/><path d="M0 663 L0 171.8 L38 178.8 L76 185.4 L114 191.3 L152 196.6 L190 201.2 L228 205.0 L266 207.9 L304 209.9 L342 210.9 L380 210.9 L418 209.9 L456 207.9 L494 205.0 L532 201.2 L570 196.6 L608 191.3 L646 185.4 L684 178.8 L722 171.8 L722 663Z" fill="#6180b0"/><path d="M0 663 L0 175.8 L38 182.6 L76 189.0 L114 194.8 L152 200.0 L190 204.4 L228 208.1 L266 211.0 L304 212.9 L342 213.9 L380 213.9 L418 212.9 L456 211.0 L494 208.1 L532 204.4 L570 200.0 L608 194.8 L646 189.0 L684 182.6 L722 175.8 L722 663Z" fill="#6281b1"/><path d="M0 663 L0 179.7 L38 186.4 L76 192.6 L114 198.3 L152 203.3 L190 207.7 L228 211.3 L266 214.0 L304 215.9 L342 216.9 L380 216.9 L418 215.9 L456 214.0 L494 211.3 L532 207.7 L570 203.3 L608 198.3 L646 192.6 L684 186.4 L722 179.7 L722 663Z" fill="#6282b2"/><path d="M0 663 L0 183.7 L38 190.2 L76 196.2 L114 201.7 L152 206.7 L190 210.9 L228 214.4 L266 217.1 L304 219.0 L342 219.9 L380 219.9 L418 219.0 L456 217.1 L494 214.4 L532 210.9 L570 206.7 L608 201.7 L646 196.2 L684 190.2 L722 183.7 L722 663Z" fill="#6383b3"/><path d="M0 663 L0 187.6 L38 194.0 L76 199.9 L114 205.2 L152 210.0 L190 214.2 L228 217.6 L266 220.2 L304 222.0 L342 222.9 L380 222.9 L418 222.0 L456 220.2 L494 217.6 L532 214.2 L570 210.0 L608 205.2 L646 199.9 L684 194.0 L722 187.6 L722 663Z" fill="#6484b4"/><path d="M0 663 L0 189.6 L38 195.9 L76 201.7 L114 207.0 L152 211.7 L190 215.8 L228 219.1 L266 221.7 L304 223.5 L342 224.4 L380 224.4 L418 223.5 L456 221.7 L494 219.1 L532 215.8 L570 211.7 L608 207.0 L646 201.7 L684 195.9 L722 189.6 L722 663Z" fill="#6585b5"/><path d="M0 663 L0 191.6 L38 197.8 L76 203.5 L114 208.7 L152 213.4 L190 217.4 L228 220.7 L266 223.3 L304 225.0 L342 225.9 L380 225.9 L418 225.0 L456 223.3 L494 220.7 L532 217.4 L570 213.4 L608 208.7 L646 203.5 L684 197.8 L722 191.6 L722 663Z" fill="#6586b6"/><path d="M0 663 L0 193.6 L38 199.6 L76 205.3 L114 210.4 L152 215.0 L190 219.0 L228 222.3 L266 224.8 L304 226.5 L342 227.4 L380 227.4 L418 226.5 L456 224.8 L494 222.3 L532 219.0 L570 215.0 L608 210.4 L646 205.3 L684 199.6 L722 193.6 L722 663Z" fill="#6687b7"/><path d="M0 663 L0 195.5 L38 201.5 L76 207.1 L114 212.2 L152 216.7 L190 220.6 L228 223.9 L266 226.3 L304 228.0 L342 228.9 L380 228.9 L418 228.0 L456 226.3 L494 223.9 L532 220.6 L570 216.7 L608 212.2 L646 207.1 L684 201.5 L722 195.5 L722 663Z" fill="#6788b8"/><path d="M0 663 L0 197.5 L38 203.4 L76 208.9 L114 213.9 L152 218.4 L190 222.3 L228 225.4 L266 227.9 L304 229.6 L342 230.4 L380 230.4 L418 229.6 L456 227.9 L494 225.4 L532 222.3 L570 218.4 L608 213.9 L646 208.9 L684 203.4 L722 197.5 L722 663Z" fill="#6888b8"/><path d="M0 663 L0 199.5 L38 205.3 L76 210.7 L114 215.7 L152 220.1 L190 223.9 L228 227.0 L266 229.4 L304 231.1 L342 231.9 L380 231.9 L418 231.1 L456 229.4 L494 227.0 L532 223.9 L570 220.1 L608 215.7 L646 210.7 L684 205.3 L722 199.5 L722 663Z" fill="#6889b9"/><path d="M0 663 L0 201.5 L38 207.2 L76 212.5 L114 217.4 L152 221.7 L190 225.5 L228 228.6 L266 231.0 L304 232.6 L342 233.4 L380 233.4 L418 232.6 L456 231.0 L494 228.6 L532 225.5 L570 221.7 L608 217.4 L646 212.5 L684 207.2 L722 201.5 L722 663Z" fill="#698aba"/><path d="M0 663 L0 203.5 L38 209.1 L76 214.4 L114 219.1 L152 223.4 L190 227.1 L228 230.2 L266 232.5 L304 234.1 L342 234.9 L380 234.9 L418 234.1 L456 232.5 L494 230.2 L532 227.1 L570 223.4 L608 219.1 L646 214.4 L684 209.1 L722 203.5 L722 663Z" fill="#6a8bbb"/><path d="M0 663 L0 205.4 L38 211.0 L76 216.2 L114 220.9 L152 225.1 L190 228.7 L228 231.7 L266 234.0 L304 235.6 L342 236.4 L380 236.4 L418 235.6 L456 234.0 L494 231.7 L532 228.7 L570 225.1 L608 220.9 L646 216.2 L684 211.0 L722 205.4 L722 663Z" fill="#6b8cbc"/><path d="M0 663 L0 207.4 L38 212.9 L76 218.0 L114 222.6 L152 226.8 L190 230.3 L228 233.3 L266 235.6 L304 237.1 L342 237.9 L380 237.9 L418 237.1 L456 235.6 L494 233.3 L532 230.3 L570 226.8 L608 222.6 L646 218.0 L684 212.9 L722 207.4 L722 663Z" fill="#6b8dbd"/><path d="M0 663 L0 209.4 L38 214.8 L76 219.8 L114 224.4 L152 228.4 L190 232.0 L228 234.9 L266 237.1 L304 238.6 L342 239.4 L380 239.4 L418 238.6 L456 237.1 L494 234.9 L532 232.0 L570 228.4 L608 224.4 L646 219.8 L684 214.8 L722 209.4 L722 663Z" fill="#6c8dbd"/><path d="M0 663 L0 211.4 L38 216.7 L76 221.6 L114 226.1 L152 230.1 L190 233.6 L228 236.4 L266 238.7 L304 240.1 L342 240.9 L380 240.9 L418 240.1 L456 238.7 L494 236.4 L532 233.6 L570 230.1 L608 226.1 L646 221.6 L684 216.7 L722 211.4 L722 663Z" fill="#6d8ebe"/><path d="M0 663 L0 213.3 L38 218.6 L76 223.4 L114 227.8 L152 231.8 L190 235.2 L228 238.0 L266 240.2 L304 241.7 L342 242.4 L380 242.4 L418 241.7 L456 240.2 L494 238.0 L532 235.2 L570 231.8 L608 227.8 L646 223.4 L684 218.6 L722 213.3 L722 663Z" fill="#6d8fbf"/><path d="M0 663 L0 215.3 L38 220.5 L76 225.2 L114 229.6 L152 233.5 L190 236.8 L228 239.6 L266 241.7 L304 243.2 L342 243.9 L380 243.9 L418 243.2 L456 241.7 L494 239.6 L532 236.8 L570 233.5 L608 229.6 L646 225.2 L684 220.5 L722 215.3 L722 663Z" fill="#6e90c0"/><path d="M0 663 L0 217.3 L38 222.4 L76 227.0 L114 231.3 L152 235.1 L190 238.4 L228 241.2 L266 243.3 L304 244.7 L342 245.4 L380 245.4 L418 244.7 L456 243.3 L494 241.2 L532 238.4 L570 235.1 L608 231.3 L646 227.0 L684 222.4 L722 217.3 L722 663Z" fill="#6f91c1"/><path d="M0 663 L0 219.3 L38 224.2 L76 228.9 L114 233.1 L152 236.8 L190 240.1 L228 242.7 L266 244.8 L304 246.2 L342 246.9 L380 246.9 L418 246.2 L456 244.8 L494 242.7 L532 240.1 L570 236.8 L608 233.1 L646 228.9 L684 224.2 L722 219.3 L722 663Z" fill="#7092c2"/><path d="M0 663 L0 221.3 L38 226.1 L76 230.7 L114 234.8 L152 238.5 L190 241.7 L228 244.3 L266 246.3 L304 247.7 L342 248.4 L380 248.4 L418 247.7 L456 246.3 L494 244.3 L532 241.7 L570 238.5 L608 234.8 L646 230.7 L684 226.1 L722 221.3 L722 663Z" fill="#7093c3"/><path d="M0 663 L0 223.2 L38 228.0 L76 232.5 L114 236.6 L152 240.2 L190 243.3 L228 245.9 L266 247.9 L304 249.2 L342 249.9 L380 249.9 L418 249.2 L456 247.9 L494 245.9 L532 243.3 L570 240.2 L608 236.6 L646 232.5 L684 228.0 L722 223.2 L722 663Z" fill="#7193c3"/><path d="M0 663 L0 225.2 L38 229.9 L76 234.3 L114 238.3 L152 241.8 L190 244.9 L228 247.5 L266 249.4 L304 250.7 L342 251.4 L380 251.4 L418 250.7 L456 249.4 L494 247.5 L532 244.9 L570 241.8 L608 238.3 L646 234.3 L684 229.9 L722 225.2 L722 663Z" fill="#7294c4"/><path d="M0 663 L0 227.2 L38 231.8 L76 236.1 L114 240.0 L152 243.5 L190 246.5 L228 249.0 L266 251.0 L304 252.3 L342 252.9 L380 252.9 L418 252.3 L456 251.0 L494 249.0 L532 246.5 L570 243.5 L608 240.0 L646 236.1 L684 231.8 L722 227.2 L722 663Z" fill="#7395c5"/><path d="M0 663 L0 229.2 L38 233.7 L76 237.9 L114 241.8 L152 245.2 L190 248.2 L228 250.6 L266 252.5 L304 253.8 L342 254.4 L380 254.4 L418 253.8 L456 252.5 L494 250.6 L532 248.2 L570 245.2 L608 241.8 L646 237.9 L684 233.7 L722 229.2 L722 663Z" fill="#7396c6"/><path d="M0 663 L0 231.1 L38 235.6 L76 239.7 L114 243.5 L152 246.9 L190 249.8 L228 252.2 L266 254.0 L304 255.3 L342 255.9 L380 255.9 L418 255.3 L456 254.0 L494 252.2 L532 249.8 L570 246.9 L608 243.5 L646 239.7 L684 235.6 L722 231.1 L722 663Z" fill="#7497c7"/><path d="M0 663 L0 233.1 L38 237.5 L76 241.6 L114 245.3 L152 248.6 L190 251.4 L228 253.8 L266 255.6 L304 256.8 L342 257.4 L380 257.4 L418 256.8 L456 255.6 L494 253.8 L532 251.4 L570 248.6 L608 245.3 L646 241.6 L684 237.5 L722 233.1 L722 663Z" fill="#7598c8"/><path d="M0 663 L0 235.1 L38 239.4 L76 243.4 L114 247.0 L152 250.2 L190 253.0 L228 255.3 L266 257.1 L304 258.3 L342 258.9 L380 258.9 L418 258.3 L456 257.1 L494 255.3 L532 253.0 L570 250.2 L608 247.0 L646 243.4 L684 239.4 L722 235.1 L722 663Z" fill="#7698c8"/><path d="M0 663 L0 237.1 L38 241.3 L76 245.2 L114 248.7 L152 251.9 L190 254.6 L228 256.9 L266 258.6 L304 259.8 L342 260.4 L380 260.4 L418 259.8 L456 258.6 L494 256.9 L532 254.6 L570 251.9 L608 248.7 L646 245.2 L684 241.3 L722 237.1 L722 663Z" fill="#7699c9"/><path d="M0 663 L0 239.1 L38 243.2 L76 247.0 L114 250.5 L152 253.6 L190 256.3 L228 258.5 L266 260.2 L304 261.3 L342 261.9 L380 261.9 L418 261.3 L456 260.2 L494 258.5 L532 256.3 L570 253.6 L608 250.5 L646 247.0 L684 243.2 L722 239.1 L722 663Z" fill="#789bcb"/><path d="M0 663 L0 241.0 L38 245.1 L76 248.8 L114 252.2 L152 255.3 L190 257.9 L228 260.0 L266 261.7 L304 262.9 L342 263.4 L380 263.4 L418 262.9 L456 261.7 L494 260.0 L532 257.9 L570 255.3 L608 252.2 L646 248.8 L684 245.1 L722 241.0 L722 663Z" fill="#799ccc"/><path d="M0 663 L0 243.0 L38 247.0 L76 250.6 L114 254.0 L152 256.9 L190 259.5 L228 261.6 L266 263.3 L304 264.4 L342 264.9 L380 264.9 L418 264.4 L456 263.3 L494 261.6 L532 259.5 L570 256.9 L608 254.0 L646 250.6 L684 247.0 L722 243.0 L722 663Z" fill="#7a9ecd"/><path d="M0 663 L0 245.0 L38 248.8 L76 252.4 L114 255.7 L152 258.6 L190 261.1 L228 263.2 L266 264.8 L304 265.9 L342 266.4 L380 266.4 L418 265.9 L456 264.8 L494 263.2 L532 261.1 L570 258.6 L608 255.7 L646 252.4 L684 248.8 L722 245.0 L722 663Z" fill="#7c9fce"/><path d="M0 663 L0 247.0 L38 250.7 L76 254.2 L114 257.4 L152 260.3 L190 262.7 L228 264.8 L266 266.3 L304 267.4 L342 267.9 L380 267.9 L418 267.4 L456 266.3 L494 264.8 L532 262.7 L570 260.3 L608 257.4 L646 254.2 L684 250.7 L722 247.0 L722 663Z" fill="#7da0cf"/><path d="M0 663 L0 248.9 L38 252.6 L76 256.1 L114 259.2 L152 262.0 L190 264.4 L228 266.3 L266 267.9 L304 268.9 L342 269.4 L380 269.4 L418 268.9 L456 267.9 L494 266.3 L532 264.4 L570 262.0 L608 259.2 L646 256.1 L684 252.6 L722 248.9 L722 663Z" fill="#7ea2d0"/><path d="M0 663 L0 250.9 L38 254.5 L76 257.9 L114 260.9 L152 263.6 L190 266.0 L228 267.9 L266 269.4 L304 270.4 L342 270.9 L380 270.9 L418 270.4 L456 269.4 L494 267.9 L532 266.0 L570 263.6 L608 260.9 L646 257.9 L684 254.5 L722 250.9 L722 663Z" fill="#7fa3d1"/><path d="M0 663 L0 252.9 L38 256.4 L76 259.7 L114 262.7 L152 265.3 L190 267.6 L228 269.5 L266 270.9 L304 271.9 L342 272.4 L380 272.4 L418 271.9 L456 270.9 L494 269.5 L532 267.6 L570 265.3 L608 262.7 L646 259.7 L684 256.4 L722 252.9 L722 663Z" fill="#81a5d2"/><path d="M0 663 L0 254.9 L38 258.3 L76 261.5 L114 264.4 L152 267.0 L190 269.2 L228 271.1 L266 272.5 L304 273.4 L342 273.9 L380 273.9 L418 273.4 L456 272.5 L494 271.1 L532 269.2 L570 267.0 L608 264.4 L646 261.5 L684 258.3 L722 254.9 L722 663Z" fill="#82a6d4"/><path d="M0 663 L0 256.9 L38 260.2 L76 263.3 L114 266.1 L152 268.7 L190 270.8 L228 272.6 L266 274.0 L304 275.0 L342 275.4 L380 275.4 L418 275.0 L456 274.0 L494 272.6 L532 270.8 L570 268.7 L608 266.1 L646 263.3 L684 260.2 L722 256.9 L722 663Z" fill="#83a7d5"/><path d="M0 663 L0 258.8 L38 262.1 L76 265.1 L114 267.9 L152 270.3 L190 272.5 L228 274.2 L266 275.6 L304 276.5 L342 276.9 L380 276.9 L418 276.5 L456 275.6 L494 274.2 L532 272.5 L570 270.3 L608 267.9 L646 265.1 L684 262.1 L722 258.8 L722 663Z" fill="#85a9d6"/><path d="M0 663 L0 260.8 L38 264.0 L76 266.9 L114 269.6 L152 272.0 L190 274.1 L228 275.8 L266 277.1 L304 278.0 L342 278.4 L380 278.4 L418 278.0 L456 277.1 L494 275.8 L532 274.1 L570 272.0 L608 269.6 L646 266.9 L684 264.0 L722 260.8 L722 663Z" fill="#86aad7"/><path d="M0 663 L0 262.8 L38 265.9 L76 268.7 L114 271.4 L152 273.7 L190 275.7 L228 277.4 L266 278.6 L304 279.5 L342 279.9 L380 279.9 L418 279.5 L456 278.6 L494 277.4 L532 275.7 L570 273.7 L608 271.4 L646 268.7 L684 265.9 L722 262.8 L722 663Z" fill="#87acd8"/><path d="M0 663 L0 264.8 L38 267.8 L76 270.6 L114 273.1 L152 275.4 L190 277.3 L228 278.9 L266 280.2 L304 281.0 L342 281.4 L380 281.4 L418 281.0 L456 280.2 L494 278.9 L532 277.3 L570 275.4 L608 273.1 L646 270.6 L684 267.8 L722 264.8 L722 663Z" fill="#89add9"/><path d="M0 663 L0 266.7 L38 269.7 L76 272.4 L114 274.8 L152 277.0 L190 278.9 L228 280.5 L266 281.7 L304 282.5 L342 282.9 L380 282.9 L418 282.5 L456 281.7 L494 280.5 L532 278.9 L570 277.0 L608 274.8 L646 272.4 L684 269.7 L722 266.7 L722 663Z" fill="#8aaeda"/><path d="M0 663 L0 268.7 L38 271.6 L76 274.2 L114 276.6 L152 278.7 L190 280.6 L228 282.1 L266 283.2 L304 284.0 L342 284.4 L380 284.4 L418 284.0 L456 283.2 L494 282.1 L532 280.6 L570 278.7 L608 276.6 L646 274.2 L684 271.6 L722 268.7 L722 663Z" fill="#8bb0dc"/><path d="M0 663 L0 270.7 L38 273.4 L76 276.0 L114 278.3 L152 280.4 L190 282.2 L228 283.7 L266 284.8 L304 285.6 L342 286.0 L380 286.0 L418 285.6 L456 284.8 L494 283.7 L532 282.2 L570 280.4 L608 278.3 L646 276.0 L684 273.4 L722 270.7 L722 663Z" fill="#8cb1dd"/><path d="M0 663 L0 272.7 L38 275.3 L76 277.8 L114 280.1 L152 282.1 L190 283.8 L228 285.2 L266 286.3 L304 287.1 L342 287.5 L380 287.5 L418 287.1 L456 286.3 L494 285.2 L532 283.8 L570 282.1 L608 280.1 L646 277.8 L684 275.3 L722 272.7 L722 663Z" fill="#8eb3de"/><path d="M0 663 L0 274.7 L38 277.2 L76 279.6 L114 281.8 L152 283.7 L190 285.4 L228 286.8 L266 287.9 L304 288.6 L342 289.0 L380 289.0 L418 288.6 L456 287.9 L494 286.8 L532 285.4 L570 283.7 L608 281.8 L646 279.6 L684 277.2 L722 274.7 L722 663Z" fill="#8fb4df"/><path d="M0 663 L0 276.6 L38 279.1 L76 281.4 L114 283.5 L152 285.4 L190 287.0 L228 288.4 L266 289.4 L304 290.1 L342 290.5 L380 290.5 L418 290.1 L456 289.4 L494 288.4 L532 287.0 L570 285.4 L608 283.5 L646 281.4 L684 279.1 L722 276.6 L722 663Z" fill="#92b7e0"/><path d="M0 663 L0 278.6 L38 281.0 L76 283.2 L114 285.3 L152 287.1 L190 288.7 L228 289.9 L266 290.9 L304 291.6 L342 292.0 L380 292.0 L418 291.6 L456 290.9 L494 289.9 L532 288.7 L570 287.1 L608 285.3 L646 283.2 L684 281.0 L722 278.6 L722 663Z" fill="#94b9e1"/><path d="M0 663 L0 280.6 L38 282.9 L76 285.1 L114 287.0 L152 288.8 L190 290.3 L228 291.5 L266 292.5 L304 293.1 L342 293.5 L380 293.5 L418 293.1 L456 292.5 L494 291.5 L532 290.3 L570 288.8 L608 287.0 L646 285.1 L684 282.9 L722 280.6 L722 663Z" fill="#97bce3"/><path d="M0 663 L0 282.6 L38 284.8 L76 286.9 L114 288.8 L152 290.4 L190 291.9 L228 293.1 L266 294.0 L304 294.6 L342 295.0 L380 295.0 L418 294.6 L456 294.0 L494 293.1 L532 291.9 L570 290.4 L608 288.8 L646 286.9 L684 284.8 L722 282.6 L722 663Z" fill="#9abee4"/><path d="M0 663 L0 284.6 L38 286.7 L76 288.7 L114 290.5 L152 292.1 L190 293.5 L228 294.7 L266 295.6 L304 296.2 L342 296.5 L380 296.5 L418 296.2 L456 295.6 L494 294.7 L532 293.5 L570 292.1 L608 290.5 L646 288.7 L684 286.7 L722 284.6 L722 663Z" fill="#9cc1e5"/><path d="M0 663 L0 286.5 L38 288.6 L76 290.5 L114 292.2 L152 293.8 L190 295.1 L228 296.2 L266 297.1 L304 297.7 L342 298.0 L380 298.0 L418 297.7 L456 297.1 L494 296.2 L532 295.1 L570 293.8 L608 292.2 L646 290.5 L684 288.6 L722 286.5 L722 663Z" fill="#9fc3e6"/><path d="M0 663 L0 288.5 L38 290.5 L76 292.3 L114 294.0 L152 295.5 L190 296.8 L228 297.8 L266 298.6 L304 299.2 L342 299.5 L380 299.5 L418 299.2 L456 298.6 L494 297.8 L532 296.8 L570 295.5 L608 294.0 L646 292.3 L684 290.5 L722 288.5 L722 663Z" fill="#a2c6e7"/><path d="M0 663 L0 290.5 L38 292.4 L76 294.1 L114 295.7 L152 297.1 L190 298.4 L228 299.4 L266 300.2 L304 300.7 L342 301.0 L380 301.0 L418 300.7 L456 300.2 L494 299.4 L532 298.4 L570 297.1 L608 295.7 L646 294.1 L684 292.4 L722 290.5 L722 663Z" fill="#a5c9e9"/><path d="M0 663 L0 292.5 L38 294.3 L76 295.9 L114 297.5 L152 298.8 L190 300.0 L228 301.0 L266 301.7 L304 302.2 L342 302.5 L380 302.5 L418 302.2 L456 301.7 L494 301.0 L532 300.0 L570 298.8 L608 297.5 L646 295.9 L684 294.3 L722 292.5 L722 663Z" fill="#a7cbea"/><path d="M0 663 L0 294.4 L38 296.2 L76 297.7 L114 299.2 L152 300.5 L190 301.6 L228 302.5 L266 303.2 L304 303.7 L342 304.0 L380 304.0 L418 303.7 L456 303.2 L494 302.5 L532 301.6 L570 300.5 L608 299.2 L646 297.7 L684 296.2 L722 294.4 L722 663Z" fill="#aaceeb"/><path d="M0 663 L0 296.4 L38 298.0 L76 299.6 L114 300.9 L152 302.2 L190 303.2 L228 304.1 L266 304.8 L304 305.2 L342 305.5 L380 305.5 L418 305.2 L456 304.8 L494 304.1 L532 303.2 L570 302.2 L608 300.9 L646 299.6 L684 298.0 L722 296.4 L722 663Z" fill="#add0ec"/><path d="M0 663 L0 298.4 L38 299.9 L76 301.4 L114 302.7 L152 303.8 L190 304.8 L228 305.7 L266 306.3 L304 306.8 L342 307.0 L380 307.0 L418 306.8 L456 306.3 L494 305.7 L532 304.8 L570 303.8 L608 302.7 L646 301.4 L684 299.9 L722 298.4 L722 663Z" fill="#afd3ed"/><path d="M0 663 L0 300.4 L38 301.8 L76 303.2 L114 304.4 L152 305.5 L190 306.5 L228 307.3 L266 307.9 L304 308.3 L342 308.5 L380 308.5 L418 308.3 L456 307.9 L494 307.3 L532 306.5 L570 305.5 L608 304.4 L646 303.2 L684 301.8 L722 300.4 L722 663Z" fill="#b2d6ef"/><path d="M0 663 L0 302.4 L38 303.7 L76 305.0 L114 306.2 L152 307.2 L190 308.1 L228 308.8 L266 309.4 L304 309.8 L342 310.0 L380 310.0 L418 309.8 L456 309.4 L494 308.8 L532 308.1 L570 307.2 L608 306.2 L646 305.0 L684 303.7 L722 302.4 L722 663Z" fill="#b5d8f0"/><path d="M0 663 L0 304.3 L38 305.6 L76 306.8 L114 307.9 L152 308.9 L190 309.7 L228 310.4 L266 310.9 L304 311.3 L342 311.5 L380 311.5 L418 311.3 L456 310.9 L494 310.4 L532 309.7 L570 308.9 L608 307.9 L646 306.8 L684 305.6 L722 304.3 L722 663Z" fill="#b8dbf1"/><path d="M0 663 L0 305.3 L38 306.5 L76 307.7 L114 308.7 L152 309.7 L190 310.5 L228 311.1 L266 311.6 L304 312.0 L342 312.2 L380 312.2 L418 312.0 L456 311.6 L494 311.1 L532 310.5 L570 309.7 L608 308.7 L646 307.7 L684 306.5 L722 305.3 L722 663Z" fill="#b9dcf2"/><path d="M0 663 L0 306.2 L38 307.4 L76 308.5 L114 309.5 L152 310.4 L190 311.2 L228 311.9 L266 312.4 L304 312.7 L342 312.9 L380 312.9 L418 312.7 L456 312.4 L494 311.9 L532 311.2 L570 310.4 L608 309.5 L646 308.5 L684 307.4 L722 306.2 L722 663Z" fill="#baddf2"/><path d="M0 663 L0 307.1 L38 308.3 L76 309.3 L114 310.3 L152 311.2 L190 312.0 L228 312.6 L266 313.1 L304 313.4 L342 313.6 L380 313.6 L418 313.4 L456 313.1 L494 312.6 L532 312.0 L570 311.2 L608 310.3 L646 309.3 L684 308.3 L722 307.1 L722 663Z" fill="#bbdef3"/><path d="M0 663 L0 308.0 L38 309.1 L76 310.2 L114 311.1 L152 312.0 L190 312.7 L228 313.3 L266 313.8 L304 314.1 L342 314.3 L380 314.3 L418 314.1 L456 313.8 L494 313.3 L532 312.7 L570 312.0 L608 311.1 L646 310.2 L684 309.1 L722 308.0 L722 663Z" fill="#bddff3"/><path d="M0 663 L0 308.9 L38 310.0 L76 311.0 L114 312.0 L152 312.8 L190 313.5 L228 314.1 L266 314.5 L304 314.8 L342 315.0 L380 315.0 L418 314.8 L456 314.5 L494 314.1 L532 313.5 L570 312.8 L608 312.0 L646 311.0 L684 310.0 L722 308.9 L722 663Z" fill="#bfe1f4"/><path d="M0 663 L0 309.9 L38 310.9 L76 311.9 L114 312.8 L152 313.6 L190 314.2 L228 314.8 L266 315.2 L304 315.5 L342 315.7 L380 315.7 L418 315.5 L456 315.2 L494 314.8 L532 314.2 L570 313.6 L608 312.8 L646 311.9 L684 310.9 L722 309.9 L722 663Z" fill="#c1e2f4"/><path d="M0 663 L0 310.8 L38 311.8 L76 312.7 L114 313.6 L152 314.3 L190 315.0 L228 315.5 L266 316.0 L304 316.2 L342 316.4 L380 316.4 L418 316.2 L456 316.0 L494 315.5 L532 315.0 L570 314.3 L608 313.6 L646 312.7 L684 311.8 L722 310.8 L722 663Z" fill="#c3e3f4"/><path d="M0 663 L0 311.7 L38 312.7 L76 313.6 L114 314.4 L152 315.1 L190 315.8 L228 316.3 L266 316.7 L304 316.9 L342 317.1 L380 317.1 L418 316.9 L456 316.7 L494 316.3 L532 315.8 L570 315.1 L608 314.4 L646 313.6 L684 312.7 L722 311.7 L722 663Z" fill="#c5e4f5"/><path d="M0 663 L0 312.6 L38 313.6 L76 314.4 L114 315.2 L152 315.9 L190 316.5 L228 317.0 L266 317.4 L304 317.7 L342 317.8 L380 317.8 L418 317.7 L456 317.4 L494 317.0 L532 316.5 L570 315.9 L608 315.2 L646 314.4 L684 313.6 L722 312.6 L722 663Z" fill="#c7e5f5"/><path d="M0 663 L0 313.6 L38 314.4 L76 315.3 L114 316.0 L152 316.7 L190 317.3 L228 317.7 L266 318.1 L304 318.4 L342 318.5 L380 318.5 L418 318.4 L456 318.1 L494 317.7 L532 317.3 L570 316.7 L608 316.0 L646 315.3 L684 314.4 L722 313.6 L722 663Z" fill="#c8e6f5"/><path d="M0 663 L0 314.5 L38 315.3 L76 316.1 L114 316.8 L152 317.5 L190 318.0 L228 318.5 L266 318.8 L304 319.1 L342 319.2 L380 319.2 L418 319.1 L456 318.8 L494 318.5 L532 318.0 L570 317.5 L608 316.8 L646 316.1 L684 315.3 L722 314.5 L722 663Z" fill="#cae7f6"/><path d="M0 663 L0 315.4 L38 316.2 L76 317.0 L114 317.6 L152 318.3 L190 318.8 L228 319.2 L266 319.5 L304 319.8 L342 319.9 L380 319.9 L418 319.8 L456 319.5 L494 319.2 L532 318.8 L570 318.3 L608 317.6 L646 317.0 L684 316.2 L722 315.4 L722 663Z" fill="#cce8f6"/><path d="M0 663 L0 316.3 L38 317.1 L76 317.8 L114 318.5 L152 319.0 L190 319.5 L228 319.9 L266 320.3 L304 320.5 L342 320.6 L380 320.6 L418 320.5 L456 320.3 L494 319.9 L532 319.5 L570 319.0 L608 318.5 L646 317.8 L684 317.1 L722 316.3 L722 663Z" fill="#cee9f7"/><path d="M0 663 L0 317.3 L38 318.0 L76 318.7 L114 319.3 L152 319.8 L190 320.3 L228 320.7 L266 321.0 L304 321.2 L342 321.3 L380 321.3 L418 321.2 L456 321.0 L494 320.7 L532 320.3 L570 319.8 L608 319.3 L646 318.7 L684 318.0 L722 317.3 L722 663Z" fill="#d0eaf7"/><path d="M0 663 L0 318.2 L38 318.9 L76 319.5 L114 320.1 L152 320.6 L190 321.0 L228 321.4 L266 321.7 L304 321.9 L342 322.0 L380 322.0 L418 321.9 L456 321.7 L494 321.4 L532 321.0 L570 320.6 L608 320.1 L646 319.5 L684 318.9 L722 318.2 L722 663Z" fill="#d2ebf7"/><path d="M0 663 L0 319.1 L38 319.7 L76 320.3 L114 320.9 L152 321.4 L190 321.8 L228 322.1 L266 322.4 L304 322.6 L342 322.7 L380 322.7 L418 322.6 L456 322.4 L494 322.1 L532 321.8 L570 321.4 L608 320.9 L646 320.3 L684 319.7 L722 319.1 L722 663Z" fill="#d4ecf8"/><path d="M0 663 L0 320.0 L38 320.6 L76 321.2 L114 321.7 L152 322.2 L190 322.6 L228 322.9 L266 323.1 L304 323.3 L342 323.4 L380 323.4 L418 323.3 L456 323.1 L494 322.9 L532 322.6 L570 322.2 L608 321.7 L646 321.2 L684 320.6 L722 320.0 L722 663Z" fill="#d6edf8"/><path d="M0 663 L0 320.9 L38 321.5 L76 322.0 L114 322.5 L152 322.9 L190 323.3 L228 323.6 L266 323.8 L304 324.0 L342 324.1 L380 324.1 L418 324.0 L456 323.8 L494 323.6 L532 323.3 L570 322.9 L608 322.5 L646 322.0 L684 321.5 L722 320.9 L722 663Z" fill="#d8eff8"/><path d="M0 663 L0 321.9 L38 322.4 L76 322.9 L114 323.3 L152 323.7 L190 324.1 L228 324.3 L266 324.6 L304 324.7 L342 324.8 L380 324.8 L418 324.7 L456 324.6 L494 324.3 L532 324.1 L570 323.7 L608 323.3 L646 322.9 L684 322.4 L722 321.9 L722 663Z" fill="#daf0f9"/><path d="M0 663 L0 322.8 L38 323.3 L76 323.7 L114 324.1 L152 324.5 L190 324.8 L228 325.1 L266 325.3 L304 325.4 L342 325.5 L380 325.5 L418 325.4 L456 325.3 L494 325.1 L532 324.8 L570 324.5 L608 324.1 L646 323.7 L684 323.3 L722 322.8 L722 663Z" fill="#dcf1f9"/><path d="M0 663 L0 323.7 L38 324.2 L76 324.6 L114 325.0 L152 325.3 L190 325.6 L228 325.8 L266 326.0 L304 326.1 L342 326.2 L380 326.2 L418 326.1 L456 326.0 L494 325.8 L532 325.6 L570 325.3 L608 325.0 L646 324.6 L684 324.2 L722 323.7 L722 663Z" fill="#def2fa"/><path d="M0 663 L0 324.6 L38 325.0 L76 325.4 L114 325.8 L152 326.1 L190 326.3 L228 326.6 L266 326.7 L304 326.8 L342 326.9 L380 326.9 L418 326.8 L456 326.7 L494 326.6 L532 326.3 L570 326.1 L608 325.8 L646 325.4 L684 325.0 L722 324.6 L722 663Z" fill="#e0f3fa"/><path d="M0 663 L0 325.6 L38 325.9 L76 326.3 L114 326.6 L152 326.9 L190 327.1 L228 327.3 L266 327.4 L304 327.5 L342 327.6 L380 327.6 L418 327.5 L456 327.4 L494 327.3 L532 327.1 L570 326.9 L608 326.6 L646 326.3 L684 325.9 L722 325.6 L722 663Z" fill="#e1f4fa"/><path d="M0 663 L0 326.5 L38 326.8 L76 327.1 L114 327.4 L152 327.6 L190 327.8 L228 328.0 L266 328.2 L304 328.2 L342 328.3 L380 328.3 L418 328.2 L456 328.2 L494 328.0 L532 327.8 L570 327.6 L608 327.4 L646 327.1 L684 326.8 L722 326.5 L722 663Z" fill="#e3f4fa"/><path d="M0 663 L0 327.4 L38 327.7 L76 328.0 L114 328.2 L152 328.4 L190 328.6 L228 328.8 L266 328.9 L304 329.0 L342 329.0 L380 329.0 L418 329.0 L456 328.9 L494 328.8 L532 328.6 L570 328.4 L608 328.2 L646 328.0 L684 327.7 L722 327.4 L722 663Z" fill="#e4f5fa"/><path d="M0 663 L0 328.3 L38 328.6 L76 328.8 L114 329.0 L152 329.2 L190 329.4 L228 329.5 L266 329.6 L304 329.7 L342 329.7 L380 329.7 L418 329.7 L456 329.6 L494 329.5 L532 329.4 L570 329.2 L608 329.0 L646 328.8 L684 328.6 L722 328.3 L722 663Z" fill="#e6f5fa"/><path d="M0 663 L0 329.3 L38 329.5 L76 329.6 L114 329.8 L152 330.0 L190 330.1 L228 330.2 L266 330.3 L304 330.4 L342 330.4 L380 330.4 L418 330.4 L456 330.3 L494 330.2 L532 330.1 L570 330.0 L608 329.8 L646 329.6 L684 329.5 L722 329.3 L722 663Z" fill="#e7f6fb"/><path d="M0 663 L0 330.2 L38 330.3 L76 330.5 L114 330.6 L152 330.8 L190 330.9 L228 331.0 L266 331.0 L304 331.1 L342 331.1 L380 331.1 L418 331.1 L456 331.0 L494 331.0 L532 330.9 L570 330.8 L608 330.6 L646 330.5 L684 330.3 L722 330.2 L722 663Z" fill="#e9f7fb"/><path d="M0 663 L0 331.1 L38 331.2 L76 331.3 L114 331.4 L152 331.5 L190 331.6 L228 331.7 L266 331.7 L304 331.8 L342 331.8 L380 331.8 L418 331.8 L456 331.7 L494 331.7 L532 331.6 L570 331.5 L608 331.4 L646 331.3 L684 331.2 L722 331.1 L722 663Z" fill="#eaf7fb"/><path d="M0 663 L0 332.0 L38 332.1 L76 332.2 L114 332.3 L152 332.3 L190 332.4 L228 332.4 L266 332.5 L304 332.5 L342 332.5 L380 332.5 L418 332.5 L456 332.5 L494 332.4 L532 332.4 L570 332.3 L608 332.3 L646 332.2 L684 332.1 L722 332.0 L722 663Z" fill="#ecf8fb"/><path d="M0 663 L0 332.9 L38 333.0 L76 333.0 L114 333.1 L152 333.1 L190 333.1 L228 333.2 L266 333.2 L304 333.2 L342 333.2 L380 333.2 L418 333.2 L456 333.2 L494 333.2 L532 333.1 L570 333.1 L608 333.1 L646 333.0 L684 333.0 L722 332.9 L722 663Z" fill="#edf9fb"/><path d="M0 663 L0 333.9 L38 333.9 L76 333.9 L114 333.9 L152 333.9 L190 333.9 L228 333.9 L266 333.9 L304 333.9 L342 333.9 L380 333.9 L418 333.9 L456 333.9 L494 333.9 L532 333.9 L570 333.9 L608 333.9 L646 333.9 L684 333.9 L722 333.9 L722 663Z" fill="#ecf7f9"/><path d="M0 663 L0 334.9 L38 334.8 L76 334.8 L114 334.7 L152 334.7 L190 334.7 L228 334.6 L266 334.6 L304 334.6 L342 334.6 L380 334.6 L418 334.6 L456 334.6 L494 334.6 L532 334.7 L570 334.7 L608 334.7 L646 334.8 L684 334.8 L722 334.9 L722 663Z" fill="#e8f2f4"/><path d="M0 663 L0 335.9 L38 335.8 L76 335.7 L114 335.6 L152 335.5 L190 335.5 L228 335.4 L266 335.4 L304 335.3 L342 335.3 L380 335.3 L418 335.3 L456 335.4 L494 335.4 L532 335.5 L570 335.5 L608 335.6 L646 335.7 L684 335.8 L722 335.9 L722 663Z" fill="#e4eef0"/><path d="M0 663 L0 337.0 L38 336.8 L76 336.6 L114 336.5 L152 336.4 L190 336.3 L228 336.2 L266 336.1 L304 336.0 L342 336.0 L380 336.0 L418 336.0 L456 336.1 L494 336.2 L532 336.3 L570 336.4 L608 336.5 L646 336.6 L684 336.8 L722 337.0 L722 663Z" fill="#e0e9eb"/><path d="M0 663 L0 338.0 L38 337.8 L76 337.6 L114 337.4 L152 337.2 L190 337.0 L228 336.9 L266 336.8 L304 336.7 L342 336.7 L380 336.7 L418 336.7 L456 336.8 L494 336.9 L532 337.0 L570 337.2 L608 337.4 L646 337.6 L684 337.8 L722 338.0 L722 663Z" fill="#dce5e7"/><path d="M0 663 L0 339.0 L38 338.8 L76 338.5 L114 338.2 L152 338.0 L190 337.8 L228 337.7 L266 337.5 L304 337.5 L342 337.4 L380 337.4 L418 337.5 L456 337.5 L494 337.7 L532 337.8 L570 338.0 L608 338.2 L646 338.5 L684 338.8 L722 339.0 L722 663Z" fill="#d9e1e3"/><path d="M0 663 L0 340.1 L38 339.7 L76 339.4 L114 339.1 L152 338.9 L190 338.6 L228 338.4 L266 338.3 L304 338.2 L342 338.1 L380 338.1 L418 338.2 L456 338.3 L494 338.4 L532 338.6 L570 338.9 L608 339.1 L646 339.4 L684 339.7 L722 340.1 L722 663Z" fill="#d2d9db"/><path d="M0 663 L0 341.1 L38 340.7 L76 340.3 L114 340.0 L152 339.7 L190 339.4 L228 339.2 L266 339.0 L304 338.9 L342 338.8 L380 338.8 L418 338.9 L456 339.0 L494 339.2 L532 339.4 L570 339.7 L608 340.0 L646 340.3 L684 340.7 L722 341.1 L722 663Z" fill="#ccd2d3"/><path d="M0 663 L0 342.2 L38 341.7 L76 341.3 L114 340.9 L152 340.5 L190 340.2 L228 339.9 L266 339.7 L304 339.6 L342 339.5 L380 339.5 L418 339.6 L456 339.7 L494 339.9 L532 340.2 L570 340.5 L608 340.9 L646 341.3 L684 341.7 L722 342.2 L722 663Z" fill="#c6caca"/><path d="M0 663 L0 343.2 L38 342.7 L76 342.2 L114 341.7 L152 341.3 L190 341.0 L228 340.7 L266 340.5 L304 340.3 L342 340.2 L380 340.2 L418 340.3 L456 340.5 L494 340.7 L532 341.0 L570 341.3 L608 341.7 L646 342.2 L684 342.7 L722 343.2 L722 663Z" fill="#bfc2c2"/><path d="M0 663 L0 344.2 L38 343.7 L76 343.1 L114 342.6 L152 342.2 L190 341.8 L228 341.4 L266 341.2 L304 341.0 L342 340.9 L380 340.9 L418 341.0 L456 341.2 L494 341.4 L532 341.8 L570 342.2 L608 342.6 L646 343.1 L684 343.7 L722 344.2 L722 663Z" fill="#b9bbba"/><path d="M0 663 L0 345.3 L38 344.6 L76 344.0 L114 343.5 L152 343.0 L190 342.6 L228 342.2 L266 341.9 L304 341.7 L342 341.6 L380 341.6 L418 341.7 L456 341.9 L494 342.2 L532 342.6 L570 343.0 L608 343.5 L646 344.0 L684 344.6 L722 345.3 L722 663Z" fill="#b2b3b2"/><path d="M0 663 L0 346.3 L38 345.6 L76 345.0 L114 344.4 L152 343.8 L190 343.3 L228 342.9 L266 342.6 L304 342.4 L342 342.3 L380 342.3 L418 342.4 L456 342.6 L494 342.9 L532 343.3 L570 343.8 L608 344.4 L646 345.0 L684 345.6 L722 346.3 L722 663Z" fill="#acaba9"/><path d="M0 663 L0 347.3 L38 346.6 L76 345.9 L114 345.2 L152 344.7 L190 344.1 L228 343.7 L266 343.4 L304 343.1 L342 343.0 L380 343.0 L418 343.1 L456 343.4 L494 343.7 L532 344.1 L570 344.7 L608 345.2 L646 345.9 L684 346.6 L722 347.3 L722 663Z" fill="#a4a2a0"/><path d="M0 663 L0 348.4 L38 347.6 L76 346.8 L114 346.1 L152 345.5 L190 344.9 L228 344.5 L266 344.1 L304 343.8 L342 343.7 L380 343.7 L418 343.8 L456 344.1 L494 344.5 L532 344.9 L570 345.5 L608 346.1 L646 346.8 L684 347.6 L722 348.4 L722 663Z" fill="#9b9895"/><path d="M0 663 L0 349.4 L38 348.6 L76 347.7 L114 347.0 L152 346.3 L190 345.7 L228 345.2 L266 344.8 L304 344.6 L342 344.4 L380 344.4 L418 344.6 L456 344.8 L494 345.2 L532 345.7 L570 346.3 L608 347.0 L646 347.7 L684 348.6 L722 349.4 L722 663Z" fill="#928e8b"/><path d="M0 663 L0 350.5 L38 349.5 L76 348.7 L114 347.9 L152 347.1 L190 346.5 L228 346.0 L266 345.6 L304 345.3 L342 345.1 L380 345.1 L418 345.3 L456 345.6 L494 346.0 L532 346.5 L570 347.1 L608 347.9 L646 348.7 L684 349.5 L722 350.5 L722 663Z" fill="#898580"/><path d="M0 663 L0 351.5 L38 350.5 L76 349.6 L114 348.7 L152 348.0 L190 347.3 L228 346.7 L266 346.3 L304 346.0 L342 345.8 L380 345.8 L418 346.0 L456 346.3 L494 346.7 L532 347.3 L570 348.0 L608 348.7 L646 349.6 L684 350.5 L722 351.5 L722 663Z" fill="#817b76"/><path d="M0 663 L0 352.5 L38 351.5 L76 350.5 L114 349.6 L152 348.8 L190 348.1 L228 347.5 L266 347.0 L304 346.7 L342 346.5 L380 346.5 L418 346.7 L456 347.0 L494 347.5 L532 348.1 L570 348.8 L608 349.6 L646 350.5 L684 351.5 L722 352.5 L722 663Z" fill="#7b7570"/><path d="M0 663 L0 353.6 L38 352.5 L76 351.4 L114 350.5 L152 349.6 L190 348.9 L228 348.2 L266 347.7 L304 347.4 L342 347.2 L380 347.2 L418 347.4 L456 347.7 L494 348.2 L532 348.9 L570 349.6 L608 350.5 L646 351.4 L684 352.5 L722 353.6 L722 663Z" fill="#76706b"/><path d="M0 663 L0 354.6 L38 353.5 L76 352.4 L114 351.4 L152 350.5 L190 349.7 L228 349.0 L266 348.5 L304 348.1 L342 347.9 L380 347.9 L418 348.1 L456 348.5 L494 349.0 L532 349.7 L570 350.5 L608 351.4 L646 352.4 L684 353.5 L722 354.6 L722 663Z" fill="#726c67"/><path d="M0 663 L0 355.6 L38 354.4 L76 353.3 L114 352.2 L152 351.3 L190 350.4 L228 349.7 L266 349.2 L304 348.8 L342 348.6 L380 348.6 L418 348.8 L456 349.2 L494 349.7 L532 350.4 L570 351.3 L608 352.2 L646 353.3 L684 354.4 L722 355.6 L722 663Z" fill="#6e6863"/><path d="M0 663 L0 356.7 L38 355.4 L76 354.2 L114 353.1 L152 352.1 L190 351.2 L228 350.5 L266 349.9 L304 349.5 L342 349.3 L380 349.3 L418 349.5 L456 349.9 L494 350.5 L532 351.2 L570 352.1 L608 353.1 L646 354.2 L684 355.4 L722 356.7 L722 663Z" fill="#6b6560"/><path d="M0 663 L0 357.7 L38 356.4 L76 355.1 L114 354.0 L152 352.9 L190 352.0 L228 351.3 L266 350.6 L304 350.2 L342 350.0 L380 350.0 L418 350.2 L456 350.6 L494 351.3 L532 352.0 L570 352.9 L608 354.0 L646 355.1 L684 356.4 L722 357.7 L722 663Z" fill="#6b6560"/><path d="M0 663 L0 358.8 L38 357.4 L76 356.1 L114 354.9 L152 353.8 L190 352.8 L228 352.0 L266 351.4 L304 350.9 L342 350.7 L380 350.7 L418 350.9 L456 351.4 L494 352.0 L532 352.8 L570 353.8 L608 354.9 L646 356.1 L684 357.4 L722 358.8 L722 663Z" fill="#6b6560"/><path d="M0 663 L0 359.8 L38 358.3 L76 357.0 L114 355.7 L152 354.6 L190 353.6 L228 352.8 L266 352.1 L304 351.7 L342 351.4 L380 351.4 L418 351.7 L456 352.1 L494 352.8 L532 353.6 L570 354.6 L608 355.7 L646 357.0 L684 358.3 L722 359.8 L722 663Z" fill="#6b6560"/><path d="M0 663 L0 360.8 L38 359.3 L76 357.9 L114 356.6 L152 355.4 L190 354.4 L228 353.5 L266 352.8 L304 352.4 L342 352.1 L380 352.1 L418 352.4 L456 352.8 L494 353.5 L532 354.4 L570 355.4 L608 356.6 L646 357.9 L684 359.3 L722 360.8 L722 663Z" fill="#6b6560"/><path d="M0 663 L0 361.9 L38 360.3 L76 358.8 L114 357.5 L152 356.3 L190 355.2 L228 354.3 L266 353.6 L304 353.1 L342 352.8 L380 352.8 L418 353.1 L456 353.6 L494 354.3 L532 355.2 L570 356.3 L608 357.5 L646 358.8 L684 360.3 L722 361.9 L722 663Z" fill="#6b6560"/><path d="M0 663 L0 362.9 L38 361.3 L76 359.8 L114 358.4 L152 357.1 L190 356.0 L228 355.0 L266 354.3 L304 353.8 L342 353.5 L380 353.5 L418 353.8 L456 354.3 L494 355.0 L532 356.0 L570 357.1 L608 358.4 L646 359.8 L684 361.3 L722 362.9 L722 663Z" fill="#6b6560"/><path d="M0 663 L0 363.9 L38 362.3 L76 360.7 L114 359.2 L152 357.9 L190 356.8 L228 355.8 L266 355.0 L304 354.5 L342 354.2 L380 354.2 L418 354.5 L456 355.0 L494 355.8 L532 356.8 L570 357.9 L608 359.2 L646 360.7 L684 362.3 L722 363.9 L722 663Z" fill="#6b6560"/><path d="M0 663 L0 365.0 L38 363.2 L76 361.6 L114 360.1 L152 358.7 L190 357.5 L228 356.5 L266 355.7 L304 355.2 L342 354.9 L380 354.9 L418 355.2 L456 355.7 L494 356.5 L532 357.5 L570 358.7 L608 360.1 L646 361.6 L684 363.2 L722 365.0 L722 663Z" fill="#6b6560"/><path d="M0 663 L0 366.0 L38 364.2 L76 362.5 L114 361.0 L152 359.6 L190 358.3 L228 357.3 L266 356.5 L304 355.9 L342 355.6 L380 355.6 L418 355.9 L456 356.5 L494 357.3 L532 358.3 L570 359.6 L608 361.0 L646 362.5 L684 364.2 L722 366.0 L722 663Z" fill="#6b6560"/><path d="M0 663 L0 367.1 L38 365.2 L76 363.5 L114 361.9 L152 360.4 L190 359.1 L228 358.0 L266 357.2 L304 356.6 L342 356.3 L380 356.3 L418 356.6 L456 357.2 L494 358.0 L532 359.1 L570 360.4 L608 361.9 L646 363.5 L684 365.2 L722 367.1 L722 663Z" fill="#6b6560"/><path d="M0 663 L0 368.1 L38 366.2 L76 364.4 L114 362.7 L152 361.2 L190 359.9 L228 358.8 L266 357.9 L304 357.3 L342 357.0 L380 357.0 L418 357.3 L456 357.9 L494 358.8 L532 359.9 L570 361.2 L608 362.7 L646 364.4 L684 366.2 L722 368.1 L722 663Z" fill="#6b6560"/><path d="M0 663 L0 369.1 L38 367.2 L76 365.3 L114 363.6 L152 362.1 L190 360.7 L228 359.6 L266 358.7 L304 358.1 L342 357.7 L380 357.7 L418 358.1 L456 358.7 L494 359.6 L532 360.7 L570 362.1 L608 363.6 L646 365.3 L684 367.2 L722 369.1 L722 663Z" fill="#6b6560"/><path d="M0 663 L0 370.2 L38 368.1 L76 366.2 L114 364.5 L152 362.9 L190 361.5 L228 360.3 L266 359.4 L304 358.8 L342 358.4 L380 358.4 L418 358.8 L456 359.4 L494 360.3 L532 361.5 L570 362.9 L608 364.5 L646 366.2 L684 368.1 L722 370.2 L722 663Z" fill="#6b6560"/><path d="M0 663 L0 371.2 L38 369.1 L76 367.2 L114 365.4 L152 363.7 L190 362.3 L228 361.1 L266 360.1 L304 359.5 L342 359.1 L380 359.1 L418 359.5 L456 360.1 L494 361.1 L532 362.3 L570 363.7 L608 365.4 L646 367.2 L684 369.1 L722 371.2 L722 663Z" fill="#6b6560"/><path d="M0 663 L0 372.2 L38 370.1 L76 368.1 L114 366.2 L152 364.5 L190 363.1 L228 361.8 L266 360.8 L304 360.2 L342 359.8 L380 359.8 L418 360.2 L456 360.8 L494 361.8 L532 363.1 L570 364.5 L608 366.2 L646 368.1 L684 370.1 L722 372.2 L722 663Z" fill="#6b6560"/><path d="M0 663 L0 373.3 L38 371.1 L76 369.0 L114 367.1 L152 365.4 L190 363.8 L228 362.6 L266 361.6 L304 360.9 L342 360.5 L380 360.5 L418 360.9 L456 361.6 L494 362.6 L532 363.8 L570 365.4 L608 367.1 L646 369.0 L684 371.1 L722 373.3 L722 663Z" fill="#6b6560"/><path d="M0 663 L0 374.3 L38 372.1 L76 369.9 L114 368.0 L152 366.2 L190 364.6 L228 363.3 L266 362.3 L304 361.6 L342 361.2 L380 361.2 L418 361.6 L456 362.3 L494 363.3 L532 364.6 L570 366.2 L608 368.0 L646 369.9 L684 372.1 L722 374.3 L722 663Z" fill="#6b6560"/><path d="M0 663 L0 375.4 L38 373.0 L76 370.9 L114 368.8 L152 367.0 L190 365.4 L228 364.1 L266 363.0 L304 362.3 L342 361.9 L380 361.9 L418 362.3 L456 363.0 L494 364.1 L532 365.4 L570 367.0 L608 368.8 L646 370.9 L684 373.0 L722 375.4 L722 663Z" fill="#6b6560"/><path d="M0 663 L0 376.4 L38 374.0 L76 371.8 L114 369.7 L152 367.9 L190 366.2 L228 364.8 L266 363.8 L304 363.0 L342 362.6 L380 362.6 L418 363.0 L456 363.8 L494 364.8 L532 366.2 L570 367.9 L608 369.7 L646 371.8 L684 374.0 L722 376.4 L722 663Z" fill="#6b6560"/><path d="M0 663 L0 377.4 L38 375.0 L76 372.7 L114 370.6 L152 368.7 L190 367.0 L228 365.6 L266 364.5 L304 363.7 L342 363.3 L380 363.3 L418 363.7 L456 364.5 L494 365.6 L532 367.0 L570 368.7 L608 370.6 L646 372.7 L684 375.0 L722 377.4 L722 663Z" fill="#6b6560"/><path d="M0 663 L0 378.5 L38 376.0 L76 373.6 L114 371.5 L152 369.5 L190 367.8 L228 366.3 L266 365.2 L304 364.4 L342 364.0 L380 364.0 L418 364.4 L456 365.2 L494 366.3 L532 367.8 L570 369.5 L608 371.5 L646 373.6 L684 376.0 L722 378.5 L722 663Z" fill="#6b6560"/><path d="M0 663 L0 379.5 L38 377.0 L76 374.6 L114 372.3 L152 370.3 L190 368.6 L228 367.1 L266 365.9 L304 365.2 L342 364.8 L380 364.8 L418 365.2 L456 365.9 L494 367.1 L532 368.6 L570 370.3 L608 372.3 L646 374.6 L684 377.0 L722 379.5 L722 663Z" fill="#6b6560"/><path d="M0 663 L0 380.5 L38 377.9 L76 375.5 L114 373.2 L152 371.2 L190 369.4 L228 367.9 L266 366.7 L304 365.9 L342 365.5 L380 365.5 L418 365.9 L456 366.7 L494 367.9 L532 369.4 L570 371.2 L608 373.2 L646 375.5 L684 377.9 L722 380.5 L722 663Z" fill="#6b6560"/><path d="M0 663 L0 381.6 L38 378.9 L76 376.4 L114 374.1 L152 372.0 L190 370.2 L228 368.6 L266 367.4 L304 366.6 L342 366.2 L380 366.2 L418 366.6 L456 367.4 L494 368.6 L532 370.2 L570 372.0 L608 374.1 L646 376.4 L684 378.9 L722 381.6 L722 663Z" fill="#6b6560"/><path d="M0 663 L0 382.6 L38 379.9 L76 377.3 L114 375.0 L152 372.8 L190 370.9 L228 369.4 L266 368.1 L304 367.3 L342 366.9 L380 366.9 L418 367.3 L456 368.1 L494 369.4 L532 370.9 L570 372.8 L608 375.0 L646 377.3 L684 379.9 L722 382.6 L722 663Z" fill="#6b6560"/><path d="M0 663 L0 383.7 L38 380.9 L76 378.3 L114 375.8 L152 373.7 L190 371.7 L228 370.1 L266 368.9 L304 368.0 L342 367.6 L380 367.6 L418 368.0 L456 368.9 L494 370.1 L532 371.7 L570 373.7 L608 375.8 L646 378.3 L684 380.9 L722 383.7 L722 663Z" fill="#6b6560"/><path d="M0 663 L0 384.7 L38 381.9 L76 379.2 L114 376.7 L152 374.5 L190 372.5 L228 370.9 L266 369.6 L304 368.7 L342 368.3 L380 368.3 L418 368.7 L456 369.6 L494 370.9 L532 372.5 L570 374.5 L608 376.7 L646 379.2 L684 381.9 L722 384.7 L722 663Z" fill="#6b6560"/><path d="M0 663 L0 385.7 L38 382.8 L76 380.1 L114 377.6 L152 375.3 L190 373.3 L228 371.6 L266 370.3 L304 369.4 L342 369.0 L380 369.0 L418 369.4 L456 370.3 L494 371.6 L532 373.3 L570 375.3 L608 377.6 L646 380.1 L684 382.8 L722 385.7 L722 663Z" fill="#6b6560"/><path d="M0 663 L0 386.8 L38 383.8 L76 381.0 L114 378.5 L152 376.1 L190 374.1 L228 372.4 L266 371.0 L304 370.1 L342 369.7 L380 369.7 L418 370.1 L456 371.0 L494 372.4 L532 374.1 L570 376.1 L608 378.5 L646 381.0 L684 383.8 L722 386.8 L722 663Z" fill="#6b6560"/><path d="M0 663 L0 387.8 L38 384.8 L76 382.0 L114 379.3 L152 377.0 L190 374.9 L228 373.1 L266 371.8 L304 370.8 L342 370.4 L380 370.4 L418 370.8 L456 371.8 L494 373.1 L532 374.9 L570 377.0 L608 379.3 L646 382.0 L684 384.8 L722 387.8 L722 663Z" fill="#6b6560"/><path d="M0 663 L0 388.8 L38 385.8 L76 382.9 L114 380.2 L152 377.8 L190 375.7 L228 373.9 L266 372.5 L304 371.5 L342 371.1 L380 371.1 L418 371.5 L456 372.5 L494 373.9 L532 375.7 L570 377.8 L608 380.2 L646 382.9 L684 385.8 L722 388.8 L722 663Z" fill="#6b6560"/><path d="M0 663 L0 389.9 L38 386.8 L76 383.8 L114 381.1 L152 378.6 L190 376.5 L228 374.6 L266 373.2 L304 372.3 L342 371.8 L380 371.8 L418 372.3 L456 373.2 L494 374.6 L532 376.5 L570 378.6 L608 381.1 L646 383.8 L684 386.8 L722 389.9 L722 663Z" fill="#6b6560"/><path d="M0 663 L0 390.9 L38 387.7 L76 384.7 L114 382.0 L152 379.5 L190 377.2 L228 375.4 L266 374.0 L304 373.0 L342 372.5 L380 372.5 L418 373.0 L456 374.0 L494 375.4 L532 377.2 L570 379.5 L608 382.0 L646 384.7 L684 387.7 L722 390.9 L722 663Z" fill="#6b6560"/><path d="M0 663 L0 392.0 L38 388.7 L76 385.7 L114 382.8 L152 380.3 L190 378.0 L228 376.2 L266 374.7 L304 373.7 L342 373.2 L380 373.2 L418 373.7 L456 374.7 L494 376.2 L532 378.0 L570 380.3 L608 382.8 L646 385.7 L684 388.7 L722 392.0 L722 663Z" fill="#6b6560"/><path d="M0 663 L0 393.0 L38 389.7 L76 386.6 L114 383.7 L152 381.1 L190 378.8 L228 376.9 L266 375.4 L304 374.4 L342 373.9 L380 373.9 L418 374.4 L456 375.4 L494 376.9 L532 378.8 L570 381.1 L608 383.7 L646 386.6 L684 389.7 L722 393.0 L722 663Z" fill="#6b6560"/></svg>
<svg class="a" style="left:0;top:0" width="722" height="663"><path d="M95.5 0 V663" stroke="#ffffff" stroke-opacity="0.045" stroke-width="1"/><path d="M154.5 0 V663" stroke="#ffffff" stroke-opacity="0.045" stroke-width="1"/><path d="M213.5 0 V663" stroke="#ffffff" stroke-opacity="0.045" stroke-width="1"/><path d="M272.5 0 V663" stroke="#ffffff" stroke-opacity="0.045" stroke-width="1"/><path d="M331.5 0 V663" stroke="#ffffff" stroke-opacity="0.045" stroke-width="1"/><path d="M390.5 0 V663" stroke="#ffffff" stroke-opacity="0.045" stroke-width="1"/><path d="M448.5 0 V663" stroke="#ffffff" stroke-opacity="0.045" stroke-width="1"/><path d="M507.5 0 V663" stroke="#ffffff" stroke-opacity="0.045" stroke-width="1"/><path d="M566.5 0 V663" stroke="#ffffff" stroke-opacity="0.045" stroke-width="1"/><path d="M625.5 0 V663" stroke="#ffffff" stroke-opacity="0.045" stroke-width="1"/><path d="M684.5 0 V663" stroke="#ffffff" stroke-opacity="0.045" stroke-width="1"/><path d="M0 116.5 H722" stroke="#ffffff" stroke-opacity="0.04" stroke-width="1"/><path d="M0 175.5 H722" stroke="#ffffff" stroke-opacity="0.04" stroke-width="1"/><path d="M0 234.5 H722" stroke="#ffffff" stroke-opacity="0.04" stroke-width="1"/><path d="M0 293.5 H722" stroke="#ffffff" stroke-opacity="0.04" stroke-width="1"/><path d="M0 352.5 H722" stroke="#ffffff" stroke-opacity="0.04" stroke-width="1"/><path d="M0 411.5 H722" stroke="#ffffff" stroke-opacity="0.04" stroke-width="1"/><path d="M0 470.5 H722" stroke="#ffffff" stroke-opacity="0.04" stroke-width="1"/><path d="M0 529.5 H722" stroke="#ffffff" stroke-opacity="0.04" stroke-width="1"/><path d="M0 646.5 H722" stroke="#ffffff" stroke-opacity="0.04" stroke-width="1"/></svg>
</div>
<div class="a" style="left:0px;top:79px;width:1px;height:663px;background:rgba(255,255,255,0.12)"></div>
<div class="a" style="left:35px;top:131px;width:586px;height:1px;background:rgba(225,230,235,0.55)"></div>
<div class="a" style="left:35px;top:667px;width:586px;height:1px;background:rgba(235,235,235,0.9)"></div>
<div class="a" style="left:35px;top:131px;width:1px;height:537px;background:rgba(225,230,235,0.55)"></div>
<div class="a" style="left:620px;top:131px;width:1px;height:537px;background:rgba(225,230,235,0.55)"></div>
<div class="a" style="left:621px;top:667px;width:101px;height:1px;background:rgba(220,220,220,0.25)"></div>
<div class="a" style="left:35px;top:668px;width:1px;height:74px;background:rgba(200,200,200,0.35)"></div>
<div class="t" style="left:253px;top:150.3px;font-family:'Liberation Mono',monospace;font-weight:400;font-size:15.6px;line-height:16px;color:#fff;-webkit-text-stroke:0.4px #fff;transform:scaleY(1.25);transform-origin:0 0;letter-spacing:-0.05px">Apocalipse Zumbi</div>
<div class="a" style="left:280px;top:390px;width:95px;height:31px;border-radius:3px;background:linear-gradient(#79d85c,#6fce52 85%,#58a83e 86%,#4e9a36)"></div>
<div class="t" style="left:311px;top:401.3px;font-family:'Liberation Mono',monospace;font-weight:400;font-size:10.5px;line-height:11px;color:#fff;-webkit-text-stroke:0.35px #fff;transform:scaleY(1.2);transform-origin:0 0">Jogar</div>
<div class="a" style="left:2px;top:664px;width:8px;height:3px;background:#8f969a"></div>
<div class="a" style="left:10px;top:662px;width:21px;height:5px;background:#a9adb0"></div>
<div class="a" style="left:18px;top:660px;width:6px;height:2px;background:#8a6a6a"></div>
<div class="a" style="left:36px;top:663px;width:20px;height:2px;background:#c8b850"></div>
<div class="a" style="left:36px;top:665px;width:26px;height:2px;background:#5f6b70"></div>
<div class="tab" style="left:726px;top:55px;width:71px;height:12px"></div>
<svg class="a" style="left:732px;top:57.5px" width="8" height="7" viewBox="0 0 8 7"><path d="M0 0.5 H1.5 M0 3.5 H1.5 M0 6.5 H1.5" stroke="#555" stroke-width="1"/><path d="M2.5 0.5 H7.5 M2.5 3.5 H7.5 M2.5 6.5 H7.5" stroke="#444" stroke-width="1"/></svg>
<div class="t" style="left:742.30px;top:57.11px;font-size:9.2px;line-height:9.2px;color:#000;font-weight:400;">Hierarchy</div>
<svg class="a" style="left:1051.5px;top:58.8px" width="6" height="7" viewBox="0 0 6 7"><path d="M1.3 3 V1.8 A1.6 1.6 0 0 1 4.5 1.8" fill="none" stroke="#555" stroke-width="1"/><rect x="0.3" y="3" width="5.2" height="4" fill="#555"/></svg>
<svg class="a" style="left:1062px;top:62px" width="11" height="5" viewBox="0 0 11 5"><path d="M0.3 1.2 H2.9 L1.6 2.7 Z" fill="#444"/><rect x="4" y="0.2" width="6.3" height="1.3" fill="#555"/><rect x="4" y="3" width="6.3" height="1.3" fill="#555"/></svg>
<div class="strip" style="left:726px;top:66px;width:349px;height:14px"></div>
<div class="a" style="left:729px;top:67px;width:1px;height:12px;background:#a6a6a6"></div>
<div class="a" style="left:767px;top:67px;width:1px;height:12px;background:#a6a6a6"></div>
<div class="t" style="left:733.70px;top:69.64px;font-size:8.1px;line-height:8.1px;color:#111;font-weight:400;">Create</div>
<svg class="a" style="left:761.5px;top:72.3px" width="5" height="3" viewBox="0 0 5 3"><path d="M0 0 H4.5 L2.25 2.6 Z" fill="#666"/></svg>
<div class="a" style="left:840px;top:68px;width:225px;height:10px;border:1px solid #8c8c8c;border-radius:5px;background:repeating-linear-gradient(135deg,#e5e5e5 0 2px,#dfdfdf 2px 3px);border-color:#959595"></div>
<svg class="a" style="left:843.3px;top:69.8px" width="9" height="7" viewBox="0 0 9 7"><circle cx="2.6" cy="2.9" r="2" fill="none" stroke="#6a6a6a" stroke-width="0.9"/><path d="M4 4.3 L5.3 5.8" stroke="#6a6a6a" stroke-width="1"/><path d="M5.2 2.2 H7.8 L6.5 3.8 Z" fill="#6a6a6a"/></svg>
<div class="t" style="left:852.50px;top:68.88px;font-size:9px;line-height:9px;color:#5e5e5e;font-weight:400;">All</div>
<div class="a" style="left:726px;top:80px;width:349px;height:284px;background:#c2c2c2"></div>
<div class="a" style="left:726px;top:80px;width:349px;height:12px;background:linear-gradient(#e4e4e4,#d8d8d8);border-bottom:1px solid #9a9a9a"></div>
<svg class="a" style="left:729px;top:84px" width="6" height="5" viewBox="0 0 6 5"><path d="M0 0 H6 L3 5 Z" fill="#7a7a7a"/></svg>
<svg class="a" style="left:738px;top:81px" width="10" height="10" viewBox="0 0 10 10"><path d="M0.8 5 L7.3 1.1 Q8.7 0.4 9.1 1.8 Q9.9 5 9.1 8.2 Q8.7 9.6 7.3 8.9 Z" fill="#fff" stroke="#111" stroke-width="1.25" stroke-linejoin="round"/><path d="M5 5 L8.4 1.3 M5 5 L8.4 8.7 M5 5 H0.8" stroke="#111" stroke-width="1"/></svg>
<div class="t" style="left:750.60px;top:82.17px;font-size:9.6px;line-height:9.6px;color:#000;font-weight:700;">menu*</div>
<svg class="a" style="left:1060.5px;top:84.5px" width="11" height="5" viewBox="0 0 11 5"><path d="M0.3 1.2 H2.9 L1.6 2.7 Z" fill="#444"/><rect x="4" y="0.2" width="6.3" height="1.3" fill="#555"/><rect x="4" y="3" width="6.3" height="1.3" fill="#555"/></svg>
<div class="t" style="left:747.40px;top:93.75px;font-size:9.15px;line-height:9.15px;color:#000;font-weight:400;">Main Camera</div>
<svg class="a" style="left:739.2px;top:105.92px" width="5" height="6" viewBox="0 0 5 6"><path d="M0 0 V6 L5 3 Z" fill="#7a7a7a"/></svg>
<div class="t" style="left:747.40px;top:105.37px;font-size:9.15px;line-height:9.15px;color:#0b2a98;font-weight:400;">Jogador</div>
<div class="t" style="left:747.40px;top:116.99px;font-size:9.15px;line-height:9.15px;color:#000;font-weight:400;">Directional Light</div>
<svg class="a" style="left:738.8px;top:129.65999999999997px" width="6" height="5" viewBox="0 0 6 5"><path d="M0 0 H6 L3 5 Z" fill="#7a7a7a"/></svg>
<div class="t" style="left:747.40px;top:128.61px;font-size:9.15px;line-height:9.15px;color:#000;font-weight:400;">Canvas</div>
<div class="t" style="left:758.00px;top:140.23px;font-size:9.15px;line-height:9.15px;color:#000;font-weight:400;">Text</div>
<svg class="a" style="left:749.6px;top:152.39999999999998px" width="5" height="6" viewBox="0 0 5 6"><path d="M0 0 V6 L5 3 Z" fill="#7a7a7a"/></svg>
<div class="t" style="left:757.60px;top:151.85px;font-size:9.15px;line-height:9.15px;color:#000;font-weight:400;">JogarButton</div>
<div class="t" style="left:747.40px;top:163.47px;font-size:9.15px;line-height:9.15px;color:#000;font-weight:400;">EventSystem</div>
<svg class="a" style="left:739.2px;top:175.64px" width="5" height="6" viewBox="0 0 5 6"><path d="M0 0 V6 L5 3 Z" fill="#7a7a7a"/></svg>
<div class="t" style="left:747.40px;top:175.09px;font-size:9.15px;line-height:9.15px;color:#000;font-weight:400;">Cenario</div>
<div class="t" style="left:747.40px;top:186.71px;font-size:9.15px;line-height:9.15px;color:#000;font-weight:400;">ControlaAudio</div>
<svg class="a" style="left:768.3px;top:196.5px" width="11" height="15" viewBox="0 0 11 15"><path d="M0.6 0.5 V12 L3.2 9.5 L5.4 13.9 L7.3 13 L5.2 8.8 H9 Z" fill="#fff" stroke="#111" stroke-width="0.95" stroke-linejoin="round"/></svg>
<div class="a" style="left:1074px;top:55px;width:1px;height:310px;background:#8a8a8a"></div>
<div class="a" style="left:726px;top:364px;width:349px;height:1px;background:#8a8a8a"></div>
<div class="a" style="left:722px;top:365px;width:353px;height:2px;background:#9c9c9c"></div>
<div class="tab" style="left:726px;top:367.5px;width:71px;height:12.5px"></div>
<svg class="a" style="left:731px;top:370.5px" width="9" height="7" viewBox="0 0 9 7"><path d="M0.5 1.5 H3.5 L4.3 0.5 H8.5 V6.5 H0.5 Z" fill="#888" stroke="#555" stroke-width="0.9"/></svg>
<div class="t" style="left:742.30px;top:370.01px;font-size:9.2px;line-height:9.2px;color:#000;font-weight:400;">Project</div>
<svg class="a" style="left:805.3px;top:369.5px" width="7" height="9" viewBox="0 0 7 9"><rect x="0.5" y="0.5" width="6" height="8" fill="#ddd" stroke="#555" stroke-width="0.9"/><path d="M1.5 3 H5.5 M1.5 6 H5.5" stroke="#666" stroke-width="0.8"/></svg>
<div class="t" style="left:815.80px;top:370.01px;font-size:9.2px;line-height:9.2px;color:#222;font-weight:400;">Console</div>
<svg class="a" style="left:1051.5px;top:371.5px" width="6" height="7" viewBox="0 0 6 7"><path d="M1.3 3 V1.8 A1.6 1.6 0 0 1 4.5 1.8" fill="none" stroke="#555" stroke-width="1"/><rect x="0.3" y="3" width="5.2" height="4" fill="#555"/></svg>
<svg class="a" style="left:1062px;top:375px" width="11" height="5" viewBox="0 0 11 5"><path d="M0.3 1.2 H2.9 L1.6 2.7 Z" fill="#444"/><rect x="4" y="0.2" width="6.3" height="1.3" fill="#555"/><rect x="4" y="3" width="6.3" height="1.3" fill="#555"/></svg>
<div class="strip" style="left:726px;top:379px;width:349px;height:14px"></div>
<div class="a" style="left:730px;top:380px;width:1px;height:12px;background:#a6a6a6"></div>
<div class="a" style="left:768px;top:380px;width:1px;height:12px;background:#a6a6a6"></div>
<div class="t" style="left:734.70px;top:382.84px;font-size:8.1px;line-height:8.1px;color:#111;font-weight:400;">Create</div>
<svg class="a" style="left:761.5px;top:385.5px" width="5" height="3" viewBox="0 0 5 3"><path d="M0 0 H4.5 L2.25 2.6 Z" fill="#666"/></svg>
<div class="a" style="left:800px;top:381px;width:219px;height:11px;border:1px solid #8c8c8c;border-radius:5px;background:repeating-linear-gradient(135deg,#e5e5e5 0 2px,#dfdfdf 2px 3px);border-color:#959595"></div>
<svg class="a" style="left:804px;top:383px" width="8" height="8" viewBox="0 0 8 8"><circle cx="3.2" cy="3.2" r="2.5" fill="none" stroke="#666" stroke-width="0.9"/><path d="M5 5 L7 7" stroke="#666" stroke-width="1"/></svg>
<div class="a" style="left:1022px;top:380px;width:1px;height:12px;background:#a6a6a6"></div>
<div class="a" style="left:1037px;top:380px;width:1px;height:12px;background:#a6a6a6"></div>
<div class="a" style="left:1054px;top:380px;width:1px;height:12px;background:#a6a6a6"></div>
<svg class="a" style="left:1026px;top:382px" width="9" height="8" viewBox="0 0 9 8"><circle cx="4.5" cy="2" r="1.8" fill="#555"/><rect x="0.5" y="4" width="3.5" height="3.5" fill="#555"/><path d="M5.5 7.5 L7.2 4 L9 7.5 Z" fill="#555"/></svg>
<svg class="a" style="left:1041.5px;top:382px" width="9" height="9" viewBox="0 0 9 9"><path d="M0.5 3.5 V0.5 H3.5 L8.5 5.5 L5.5 8.5 Z" fill="#555"/><circle cx="2.2" cy="2.2" r="0.8" fill="#ddd"/></svg>
<svg class="a" style="left:1057.5px;top:382.5px" width="8" height="8" viewBox="0 0 8 8"><path d="M4 0.3 L5 3 H7.8 L5.6 4.8 L6.4 7.6 L4 6 L1.6 7.6 L2.4 4.8 L0.2 3 H3 Z" fill="#999"/></svg>
<div class="a" style="left:726px;top:393px;width:70px;height:349px;background:#c2c2c2"></div>
<div class="a" style="left:805px;top:393px;width:270px;height:349px;background:#c2c2c2"></div>
<div class="a" style="left:805px;top:393px;width:270px;height:12px;background:linear-gradient(#ededed,#e2e2e2);border-bottom:1px solid #a9a9a9"></div>
<div class="t" style="left:810.70px;top:395.71px;font-size:9.2px;line-height:9.2px;color:#000;font-weight:700;">Assets</div>
<div class="a" style="left:795px;top:393px;width:10px;height:349px;background:linear-gradient(90deg,#c8c8c8,#dedede 50%,#cfcfcf)"></div>
<div class="a" style="left:805px;top:393px;width:1px;height:349px;background:#b0b0b0"></div>
<svg class="a" style="left:797.8px;top:397.5px" width="6" height="4" viewBox="0 0 6 4"><path d="M0 3.5 H5.3 L2.65 0 Z" fill="#333"/></svg>
<svg class="a" style="left:797.7px;top:734.3px" width="6" height="4" viewBox="0 0 6 4"><path d="M0 0 H5.3 L2.65 3.5 Z" fill="#333"/></svg>
<div class="a" style="left:795.8px;top:406px;width:9px;height:320px;border-radius:4.5px;background:linear-gradient(90deg,#6b82a8,#8fa6c8 40%,#7890b5 80%,#5f7597);border:1px solid #5a6c8c"></div>
<svg class="a" style="left:729px;top:396.5px" width="6" height="5" viewBox="0 0 6 5"><path d="M0 0 H6 L3 5 Z" fill="#7a7a7a"/></svg>
<svg class="a" style="left:737.5px;top:393.5px" width="11" height="11" viewBox="0 0 11 11"><path d="M5.5 0.5 L7 4 H10.6 L7.7 6.3 L8.8 10 L5.5 7.8 L2.2 10 L3.3 6.3 L0.4 4 H4 Z" fill="#f6cf22" stroke="#b08a00" stroke-width="0.6"/></svg>
<div class="a" style="left:726px;top:393px;width:69px;height:340px;overflow:hidden">
<div class="t" style="left:24.60px;top:2.37px;font-size:9.6px;line-height:9.6px;color:#000;font-weight:700">Favorites</div>
</div>
<div class="a" style="left:726px;top:393px;width:69px;height:349px;overflow:hidden">
<svg class="a" style="left:21.5px;top:12.199999999999989px" width="11" height="11" viewBox="0 0 11 11"><circle cx="4.5" cy="4.5" r="3.3" fill="none" stroke="#e8c21a" stroke-width="1.6"/><path d="M6.8 6.8 L10 10" stroke="#e8c21a" stroke-width="2" stroke-linecap="round"/></svg>
<div class="t" style="left:34.80px;top:14.35px;font-size:9.15px;line-height:9.15px;color:#000;font-weight:400">All Materials</div>
<svg class="a" style="left:21.5px;top:23.819999999999993px" width="11" height="11" viewBox="0 0 11 11"><circle cx="4.5" cy="4.5" r="3.3" fill="none" stroke="#e8c21a" stroke-width="1.6"/><path d="M6.8 6.8 L10 10" stroke="#e8c21a" stroke-width="2" stroke-linecap="round"/></svg>
<div class="t" style="left:34.80px;top:25.97px;font-size:9.15px;line-height:9.15px;color:#000;font-weight:400">All Models</div>
<svg class="a" style="left:21.5px;top:35.44px" width="11" height="11" viewBox="0 0 11 11"><circle cx="4.5" cy="4.5" r="3.3" fill="none" stroke="#e8c21a" stroke-width="1.6"/><path d="M6.8 6.8 L10 10" stroke="#e8c21a" stroke-width="2" stroke-linecap="round"/></svg>
<div class="t" style="left:34.80px;top:37.59px;font-size:9.15px;line-height:9.15px;color:#000;font-weight:400">All Prefabs</div>
<div class="a" style="left:0px;top:57px;width:69px;height:11px;background:#8e8e8e"></div>
<svg class="a" style="left:2.6000000000000227px;top:60.98000000000002px" width="6" height="5" viewBox="0 0 6 5"><path d="M0 0 H6 L3 5 Z" fill="#3a3a3a"/></svg>
<svg class="a" style="left:11.700000000000045px;top:58.379999999999995px" width="10.5" height="9.5" viewBox="0 0 10.5 9.5"><path d="M0.6 3.2 V1.3 Q0.6 0.4 1.5 0.4 H4 Q4.9 0.4 4.9 1.3 V2.4" fill="#ececec" stroke="#454b50" stroke-width="0.9"/><rect x="0.2" y="2.3" width="10" height="7" rx="1" fill="#525d66"/><path d="M5 4.2 H9.6" stroke="#e2e6ea" stroke-width="0.9"/><path d="M0.7 4.6 H4.6" stroke="#9aa6b4" stroke-width="0.8"/><path d="M0.8 6.3 H9.6" stroke="#5e6973" stroke-width="0.6"/></svg>
<div class="t" style="left:24.60px;top:59.42px;font-size:9.4px;line-height:9.4px;color:#fff;font-weight:700">Assets</div>
<svg class="a" style="left:21.600000000000023px;top:70.99999999999994px" width="10.5" height="9.5" viewBox="0 0 10.5 9.5"><path d="M0.6 3.2 V1.3 Q0.6 0.4 1.5 0.4 H4 Q4.9 0.4 4.9 1.3 V2.4" fill="#ececec" stroke="#454b50" stroke-width="0.9"/><rect x="0.2" y="2.3" width="10" height="7" rx="1" fill="#525d66"/><path d="M5 4.2 H9.6" stroke="#e2e6ea" stroke-width="0.9"/><path d="M0.7 4.6 H4.6" stroke="#9aa6b4" stroke-width="0.8"/><path d="M0.8 6.3 H9.6" stroke="#5e6973" stroke-width="0.6"/></svg>
<div class="t" style="left:34.80px;top:72.45px;font-size:9.15px;line-height:9.15px;color:#000;font-weight:400">Animacoes</div>
<svg class="a" style="left:21.600000000000023px;top:82.61999999999995px" width="10.5" height="9.5" viewBox="0 0 10.5 9.5"><path d="M0.6 3.2 V1.3 Q0.6 0.4 1.5 0.4 H4 Q4.9 0.4 4.9 1.3 V2.4" fill="#ececec" stroke="#454b50" stroke-width="0.9"/><rect x="0.2" y="2.3" width="10" height="7" rx="1" fill="#525d66"/><path d="M5 4.2 H9.6" stroke="#e2e6ea" stroke-width="0.9"/><path d="M0.7 4.6 H4.6" stroke="#9aa6b4" stroke-width="0.8"/><path d="M0.8 6.3 H9.6" stroke="#5e6973" stroke-width="0.6"/></svg>
<div class="t" style="left:34.80px;top:84.07px;font-size:9.15px;line-height:9.15px;color:#000;font-weight:400">Audio</div>
<svg class="a" style="left:21.600000000000023px;top:94.23999999999995px" width="10.5" height="9.5" viewBox="0 0 10.5 9.5"><path d="M0.6 3.2 V1.3 Q0.6 0.4 1.5 0.4 H4 Q4.9 0.4 4.9 1.3 V2.4" fill="#ececec" stroke="#454b50" stroke-width="0.9"/><rect x="0.2" y="2.3" width="10" height="7" rx="1" fill="#525d66"/><path d="M5 4.2 H9.6" stroke="#e2e6ea" stroke-width="0.9"/><path d="M0.7 4.6 H4.6" stroke="#9aa6b4" stroke-width="0.8"/><path d="M0.8 6.3 H9.6" stroke="#5e6973" stroke-width="0.6"/></svg>
<div class="t" style="left:34.80px;top:95.69px;font-size:9.15px;line-height:9.15px;color:#000;font-weight:400">game</div>
<svg class="a" style="left:21.600000000000023px;top:105.85999999999996px" width="10.5" height="9.5" viewBox="0 0 10.5 9.5"><path d="M0.6 3.2 V1.3 Q0.6 0.4 1.5 0.4 H4 Q4.9 0.4 4.9 1.3 V2.4" fill="#ececec" stroke="#454b50" stroke-width="0.9"/><rect x="0.2" y="2.3" width="10" height="7" rx="1" fill="#525d66"/><path d="M5 4.2 H9.6" stroke="#e2e6ea" stroke-width="0.9"/><path d="M0.7 4.6 H4.6" stroke="#9aa6b4" stroke-width="0.8"/><path d="M0.8 6.3 H9.6" stroke="#5e6973" stroke-width="0.6"/></svg>
<div class="t" style="left:34.80px;top:107.31px;font-size:9.15px;line-height:9.15px;color:#000;font-weight:400">Interface</div>
<svg class="a" style="left:13.100000000000023px;top:118.97999999999996px" width="5" height="6" viewBox="0 0 5 6"><path d="M0 0 V6 L5 3 Z" fill="#7a7a7a"/></svg>
<svg class="a" style="left:21.600000000000023px;top:117.47999999999996px" width="10.5" height="9.5" viewBox="0 0 10.5 9.5"><path d="M0.6 3.2 V1.3 Q0.6 0.4 1.5 0.4 H4 Q4.9 0.4 4.9 1.3 V2.4" fill="#ececec" stroke="#454b50" stroke-width="0.9"/><rect x="0.2" y="2.3" width="10" height="7" rx="1" fill="#525d66"/><path d="M5 4.2 H9.6" stroke="#e2e6ea" stroke-width="0.9"/><path d="M0.7 4.6 H4.6" stroke="#9aa6b4" stroke-width="0.8"/><path d="M0.8 6.3 H9.6" stroke="#5e6973" stroke-width="0.6"/></svg>
<div class="t" style="left:34.80px;top:118.93px;font-size:9.15px;line-height:9.15px;color:#000;font-weight:400">Materiais</div>
<svg class="a" style="left:12.600000000000023px;top:131.39999999999998px" width="6" height="5" viewBox="0 0 6 5"><path d="M0 0 H6 L3 5 Z" fill="#7a7a7a"/></svg>
<svg class="a" style="left:21.600000000000023px;top:129.10000000000002px" width="10.5" height="9.5" viewBox="0 0 10.5 9.5"><path d="M0.6 3.2 V1.3 Q0.6 0.4 1.5 0.4 H4 Q4.9 0.4 4.9 1.3 V2.4" fill="#ececec" stroke="#454b50" stroke-width="0.9"/><rect x="0.2" y="2.3" width="10" height="7" rx="1" fill="#525d66"/><path d="M5 4.2 H9.6" stroke="#e2e6ea" stroke-width="0.9"/><path d="M0.7 4.6 H4.6" stroke="#9aa6b4" stroke-width="0.8"/><path d="M0.8 6.3 H9.6" stroke="#5e6973" stroke-width="0.6"/></svg>
<div class="t" style="left:34.80px;top:130.55px;font-size:9.15px;line-height:9.15px;color:#000;font-weight:400">Modelos3D</div>
<svg class="a" style="left:31.800000000000068px;top:140.72000000000003px" width="10.5" height="9.5" viewBox="0 0 10.5 9.5"><path d="M0.6 3.2 V1.3 Q0.6 0.4 1.5 0.4 H4 Q4.9 0.4 4.9 1.3 V2.4" fill="#ececec" stroke="#454b50" stroke-width="0.9"/><rect x="0.2" y="2.3" width="10" height="7" rx="1" fill="#525d66"/><path d="M5 4.2 H9.6" stroke="#e2e6ea" stroke-width="0.9"/><path d="M0.7 4.6 H4.6" stroke="#9aa6b4" stroke-width="0.8"/><path d="M0.8 6.3 H9.6" stroke="#5e6973" stroke-width="0.6"/></svg>
<div class="t" style="left:45.00px;top:142.17px;font-size:9.15px;line-height:9.15px;color:#000;font-weight:400">Aderecos</div>
<svg class="a" style="left:31.800000000000068px;top:152.34000000000003px" width="10.5" height="9.5" viewBox="0 0 10.5 9.5"><path d="M0.6 3.2 V1.3 Q0.6 0.4 1.5 0.4 H4 Q4.9 0.4 4.9 1.3 V2.4" fill="#ececec" stroke="#454b50" stroke-width="0.9"/><rect x="0.2" y="2.3" width="10" height="7" rx="1" fill="#525d66"/><path d="M5 4.2 H9.6" stroke="#e2e6ea" stroke-width="0.9"/><path d="M0.7 4.6 H4.6" stroke="#9aa6b4" stroke-width="0.8"/><path d="M0.8 6.3 H9.6" stroke="#5e6973" stroke-width="0.6"/></svg>
<div class="t" style="left:45.00px;top:153.79px;font-size:9.15px;line-height:9.15px;color:#000;font-weight:400">Ambiente</div>
<svg class="a" style="left:31.800000000000068px;top:163.96000000000004px" width="10.5" height="9.5" viewBox="0 0 10.5 9.5"><path d="M0.6 3.2 V1.3 Q0.6 0.4 1.5 0.4 H4 Q4.9 0.4 4.9 1.3 V2.4" fill="#ececec" stroke="#454b50" stroke-width="0.9"/><rect x="0.2" y="2.3" width="10" height="7" rx="1" fill="#525d66"/><path d="M5 4.2 H9.6" stroke="#e2e6ea" stroke-width="0.9"/><path d="M0.7 4.6 H4.6" stroke="#9aa6b4" stroke-width="0.8"/><path d="M0.8 6.3 H9.6" stroke="#5e6973" stroke-width="0.6"/></svg>
<div class="t" style="left:45.00px;top:165.41px;font-size:9.15px;line-height:9.15px;color:#000;font-weight:400">Armas</div>
<svg class="a" style="left:31.800000000000068px;top:175.58000000000004px" width="10.5" height="9.5" viewBox="0 0 10.5 9.5"><path d="M0.6 3.2 V1.3 Q0.6 0.4 1.5 0.4 H4 Q4.9 0.4 4.9 1.3 V2.4" fill="#ececec" stroke="#454b50" stroke-width="0.9"/><rect x="0.2" y="2.3" width="10" height="7" rx="1" fill="#525d66"/><path d="M5 4.2 H9.6" stroke="#e2e6ea" stroke-width="0.9"/><path d="M0.7 4.6 H4.6" stroke="#9aa6b4" stroke-width="0.8"/><path d="M0.8 6.3 H9.6" stroke="#5e6973" stroke-width="0.6"/></svg>
<div class="t" style="left:45.00px;top:177.03px;font-size:9.15px;line-height:9.15px;color:#000;font-weight:400">Construcoes</div>
<svg class="a" style="left:31.800000000000068px;top:187.20000000000005px" width="10.5" height="9.5" viewBox="0 0 10.5 9.5"><path d="M0.6 3.2 V1.3 Q0.6 0.4 1.5 0.4 H4 Q4.9 0.4 4.9 1.3 V2.4" fill="#ececec" stroke="#454b50" stroke-width="0.9"/><rect x="0.2" y="2.3" width="10" height="7" rx="1" fill="#525d66"/><path d="M5 4.2 H9.6" stroke="#e2e6ea" stroke-width="0.9"/><path d="M0.7 4.6 H4.6" stroke="#9aa6b4" stroke-width="0.8"/><path d="M0.8 6.3 H9.6" stroke="#5e6973" stroke-width="0.6"/></svg>
<div class="t" style="left:45.00px;top:188.65px;font-size:9.15px;line-height:9.15px;color:#000;font-weight:400">Itens</div>
<svg class="a" style="left:22.800000000000068px;top:201.12px" width="6" height="5" viewBox="0 0 6 5"><path d="M0 0 H6 L3 5 Z" fill="#7a7a7a"/></svg>
<svg class="a" style="left:31.800000000000068px;top:198.82000000000005px" width="10.5" height="9.5" viewBox="0 0 10.5 9.5"><path d="M0.6 3.2 V1.3 Q0.6 0.4 1.5 0.4 H4 Q4.9 0.4 4.9 1.3 V2.4" fill="#ececec" stroke="#454b50" stroke-width="0.9"/><rect x="0.2" y="2.3" width="10" height="7" rx="1" fill="#525d66"/><path d="M5 4.2 H9.6" stroke="#e2e6ea" stroke-width="0.9"/><path d="M0.7 4.6 H4.6" stroke="#9aa6b4" stroke-width="0.8"/><path d="M0.8 6.3 H9.6" stroke="#5e6973" stroke-width="0.6"/></svg>
<div class="t" style="left:45.00px;top:200.27px;font-size:9.15px;line-height:9.15px;color:#000;font-weight:400">Personagens</div>
<svg class="a" style="left:33.5px;top:211.94000000000005px" width="5" height="6" viewBox="0 0 5 6"><path d="M0 0 V6 L5 3 Z" fill="#7a7a7a"/></svg>
<svg class="a" style="left:42.0px;top:210.44000000000005px" width="10.5" height="9.5" viewBox="0 0 10.5 9.5"><path d="M0.6 3.2 V1.3 Q0.6 0.4 1.5 0.4 H4 Q4.9 0.4 4.9 1.3 V2.4" fill="#ececec" stroke="#454b50" stroke-width="0.9"/><rect x="0.2" y="2.3" width="10" height="7" rx="1" fill="#525d66"/><path d="M5 4.2 H9.6" stroke="#e2e6ea" stroke-width="0.9"/><path d="M0.7 4.6 H4.6" stroke="#9aa6b4" stroke-width="0.8"/><path d="M0.8 6.3 H9.6" stroke="#5e6973" stroke-width="0.6"/></svg>
<div class="t" style="left:55.20px;top:211.89px;font-size:9.15px;line-height:9.15px;color:#000;font-weight:400">Animacoes</div>
<svg class="a" style="left:31.800000000000068px;top:222.06000000000006px" width="10.5" height="9.5" viewBox="0 0 10.5 9.5"><path d="M0.6 3.2 V1.3 Q0.6 0.4 1.5 0.4 H4 Q4.9 0.4 4.9 1.3 V2.4" fill="#ececec" stroke="#454b50" stroke-width="0.9"/><rect x="0.2" y="2.3" width="10" height="7" rx="1" fill="#525d66"/><path d="M5 4.2 H9.6" stroke="#e2e6ea" stroke-width="0.9"/><path d="M0.7 4.6 H4.6" stroke="#9aa6b4" stroke-width="0.8"/><path d="M0.8 6.3 H9.6" stroke="#5e6973" stroke-width="0.6"/></svg>
<div class="t" style="left:45.00px;top:223.51px;font-size:9.15px;line-height:9.15px;color:#000;font-weight:400">Veiculos</div>
<svg class="a" style="left:12.600000000000023px;top:235.98000000000002px" width="6" height="5" viewBox="0 0 6 5"><path d="M0 0 H6 L3 5 Z" fill="#7a7a7a"/></svg>
<svg class="a" style="left:21.600000000000023px;top:233.68000000000006px" width="10.5" height="9.5" viewBox="0 0 10.5 9.5"><path d="M0.6 3.2 V1.3 Q0.6 0.4 1.5 0.4 H4 Q4.9 0.4 4.9 1.3 V2.4" fill="#ececec" stroke="#454b50" stroke-width="0.9"/><rect x="0.2" y="2.3" width="10" height="7" rx="1" fill="#525d66"/><path d="M5 4.2 H9.6" stroke="#e2e6ea" stroke-width="0.9"/><path d="M0.7 4.6 H4.6" stroke="#9aa6b4" stroke-width="0.8"/><path d="M0.8 6.3 H9.6" stroke="#5e6973" stroke-width="0.6"/></svg>
<div class="t" style="left:34.80px;top:235.13px;font-size:9.15px;line-height:9.15px;color:#000;font-weight:400">Prefabs</div>
<svg class="a" style="left:31.800000000000068px;top:245.29999999999995px" width="10.5" height="9.5" viewBox="0 0 10.5 9.5"><path d="M0.6 3.2 V1.3 Q0.6 0.4 1.5 0.4 H4 Q4.9 0.4 4.9 1.3 V2.4" fill="#ececec" stroke="#454b50" stroke-width="0.9"/><rect x="0.2" y="2.3" width="10" height="7" rx="1" fill="#525d66"/><path d="M5 4.2 H9.6" stroke="#e2e6ea" stroke-width="0.9"/><path d="M0.7 4.6 H4.6" stroke="#9aa6b4" stroke-width="0.8"/><path d="M0.8 6.3 H9.6" stroke="#5e6973" stroke-width="0.6"/></svg>
<div class="t" style="left:45.00px;top:246.75px;font-size:9.15px;line-height:9.15px;color:#000;font-weight:400">Aderecos</div>
<svg class="a" style="left:31.800000000000068px;top:256.9200000000001px" width="10.5" height="9.5" viewBox="0 0 10.5 9.5"><path d="M0.6 3.2 V1.3 Q0.6 0.4 1.5 0.4 H4 Q4.9 0.4 4.9 1.3 V2.4" fill="#ececec" stroke="#454b50" stroke-width="0.9"/><rect x="0.2" y="2.3" width="10" height="7" rx="1" fill="#525d66"/><path d="M5 4.2 H9.6" stroke="#e2e6ea" stroke-width="0.9"/><path d="M0.7 4.6 H4.6" stroke="#9aa6b4" stroke-width="0.8"/><path d="M0.8 6.3 H9.6" stroke="#5e6973" stroke-width="0.6"/></svg>
<div class="t" style="left:45.00px;top:258.37px;font-size:9.15px;line-height:9.15px;color:#000;font-weight:400">Ambiente</div>
<svg class="a" style="left:31.800000000000068px;top:268.53999999999996px" width="10.5" height="9.5" viewBox="0 0 10.5 9.5"><path d="M0.6 3.2 V1.3 Q0.6 0.4 1.5 0.4 H4 Q4.9 0.4 4.9 1.3 V2.4" fill="#ececec" stroke="#454b50" stroke-width="0.9"/><rect x="0.2" y="2.3" width="10" height="7" rx="1" fill="#525d66"/><path d="M5 4.2 H9.6" stroke="#e2e6ea" stroke-width="0.9"/><path d="M0.7 4.6 H4.6" stroke="#9aa6b4" stroke-width="0.8"/><path d="M0.8 6.3 H9.6" stroke="#5e6973" stroke-width="0.6"/></svg>
<div class="t" style="left:45.00px;top:269.99px;font-size:9.15px;line-height:9.15px;color:#000;font-weight:400">Armas</div>
<svg class="a" style="left:31.800000000000068px;top:280.1600000000001px" width="10.5" height="9.5" viewBox="0 0 10.5 9.5"><path d="M0.6 3.2 V1.3 Q0.6 0.4 1.5 0.4 H4 Q4.9 0.4 4.9 1.3 V2.4" fill="#ececec" stroke="#454b50" stroke-width="0.9"/><rect x="0.2" y="2.3" width="10" height="7" rx="1" fill="#525d66"/><path d="M5 4.2 H9.6" stroke="#e2e6ea" stroke-width="0.9"/><path d="M0.7 4.6 H4.6" stroke="#9aa6b4" stroke-width="0.8"/><path d="M0.8 6.3 H9.6" stroke="#5e6973" stroke-width="0.6"/></svg>
<div class="t" style="left:45.00px;top:281.61px;font-size:9.15px;line-height:9.15px;color:#000;font-weight:400">Construcoes</div>
<svg class="a" style="left:31.800000000000068px;top:291.78px" width="10.5" height="9.5" viewBox="0 0 10.5 9.5"><path d="M0.6 3.2 V1.3 Q0.6 0.4 1.5 0.4 H4 Q4.9 0.4 4.9 1.3 V2.4" fill="#ececec" stroke="#454b50" stroke-width="0.9"/><rect x="0.2" y="2.3" width="10" height="7" rx="1" fill="#525d66"/><path d="M5 4.2 H9.6" stroke="#e2e6ea" stroke-width="0.9"/><path d="M0.7 4.6 H4.6" stroke="#9aa6b4" stroke-width="0.8"/><path d="M0.8 6.3 H9.6" stroke="#5e6973" stroke-width="0.6"/></svg>
<div class="t" style="left:45.00px;top:293.23px;font-size:9.15px;line-height:9.15px;color:#000;font-weight:400">Itens</div>
<svg class="a" style="left:31.800000000000068px;top:303.4000000000001px" width="10.5" height="9.5" viewBox="0 0 10.5 9.5"><path d="M0.6 3.2 V1.3 Q0.6 0.4 1.5 0.4 H4 Q4.9 0.4 4.9 1.3 V2.4" fill="#ececec" stroke="#454b50" stroke-width="0.9"/><rect x="0.2" y="2.3" width="10" height="7" rx="1" fill="#525d66"/><path d="M5 4.2 H9.6" stroke="#e2e6ea" stroke-width="0.9"/><path d="M0.7 4.6 H4.6" stroke="#9aa6b4" stroke-width="0.8"/><path d="M0.8 6.3 H9.6" stroke="#5e6973" stroke-width="0.6"/></svg>
<div class="t" style="left:45.00px;top:304.85px;font-size:9.15px;line-height:9.15px;color:#000;font-weight:400">Personagens</div>
<svg class="a" style="left:31.800000000000068px;top:315.02px" width="10.5" height="9.5" viewBox="0 0 10.5 9.5"><path d="M0.6 3.2 V1.3 Q0.6 0.4 1.5 0.4 H4 Q4.9 0.4 4.9 1.3 V2.4" fill="#ececec" stroke="#454b50" stroke-width="0.9"/><rect x="0.2" y="2.3" width="10" height="7" rx="1" fill="#525d66"/><path d="M5 4.2 H9.6" stroke="#e2e6ea" stroke-width="0.9"/><path d="M0.7 4.6 H4.6" stroke="#9aa6b4" stroke-width="0.8"/><path d="M0.8 6.3 H9.6" stroke="#5e6973" stroke-width="0.6"/></svg>
<div class="t" style="left:45.00px;top:316.47px;font-size:9.15px;line-height:9.15px;color:#000;font-weight:400">Veiculos</div>
<svg class="a" style="left:21.600000000000023px;top:326.64px" width="10.5" height="9.5" viewBox="0 0 10.5 9.5"><path d="M0.6 3.2 V1.3 Q0.6 0.4 1.5 0.4 H4 Q4.9 0.4 4.9 1.3 V2.4" fill="#ececec" stroke="#454b50" stroke-width="0.9"/><rect x="0.2" y="2.3" width="10" height="7" rx="1" fill="#525d66"/><path d="M5 4.2 H9.6" stroke="#e2e6ea" stroke-width="0.9"/><path d="M0.7 4.6 H4.6" stroke="#9aa6b4" stroke-width="0.8"/><path d="M0.8 6.3 H9.6" stroke="#5e6973" stroke-width="0.6"/></svg>
<div class="t" style="left:34.80px;top:328.09px;font-size:9.15px;line-height:9.15px;color:#000;font-weight:400">Scripts</div>
<svg class="a" style="left:13.100000000000023px;top:339.76px" width="5" height="6" viewBox="0 0 5 6"><path d="M0 0 V6 L5 3 Z" fill="#7a7a7a"/></svg>
<svg class="a" style="left:21.600000000000023px;top:338.26px" width="10.5" height="9.5" viewBox="0 0 10.5 9.5"><path d="M0.6 3.2 V1.3 Q0.6 0.4 1.5 0.4 H4 Q4.9 0.4 4.9 1.3 V2.4" fill="#ececec" stroke="#454b50" stroke-width="0.9"/><rect x="0.2" y="2.3" width="10" height="7" rx="1" fill="#525d66"/><path d="M5 4.2 H9.6" stroke="#e2e6ea" stroke-width="0.9"/><path d="M0.7 4.6 H4.6" stroke="#9aa6b4" stroke-width="0.8"/><path d="M0.8 6.3 H9.6" stroke="#5e6973" stroke-width="0.6"/></svg>
<div class="t" style="left:34.80px;top:339.71px;font-size:9.15px;line-height:9.15px;color:#000;font-weight:400">Texturas</div>
</div>
<svg class="a" style="left:817.3px;top:407.7px" width="10.5" height="9.5" viewBox="0 0 10.5 9.5"><path d="M0.6 3.2 V1.3 Q0.6 0.4 1.5 0.4 H4 Q4.9 0.4 4.9 1.3 V2.4" fill="#ececec" stroke="#454b50" stroke-width="0.9"/><rect x="0.2" y="2.3" width="10" height="7" rx="1" fill="#525d66"/><path d="M5 4.2 H9.6" stroke="#e2e6ea" stroke-width="0.9"/><path d="M0.7 4.6 H4.6" stroke="#9aa6b4" stroke-width="0.8"/><path d="M0.8 6.3 H9.6" stroke="#5e6973" stroke-width="0.6"/></svg>
<div class="t" style="left:830.60px;top:408.81px;font-size:9.2px;line-height:9.2px;color:#000;font-weight:400;">Animacoes</div>
<svg class="a" style="left:817.3px;top:419.32px" width="10.5" height="9.5" viewBox="0 0 10.5 9.5"><path d="M0.6 3.2 V1.3 Q0.6 0.4 1.5 0.4 H4 Q4.9 0.4 4.9 1.3 V2.4" fill="#ececec" stroke="#454b50" stroke-width="0.9"/><rect x="0.2" y="2.3" width="10" height="7" rx="1" fill="#525d66"/><path d="M5 4.2 H9.6" stroke="#e2e6ea" stroke-width="0.9"/><path d="M0.7 4.6 H4.6" stroke="#9aa6b4" stroke-width="0.8"/><path d="M0.8 6.3 H9.6" stroke="#5e6973" stroke-width="0.6"/></svg>
<div class="t" style="left:830.60px;top:420.43px;font-size:9.2px;line-height:9.2px;color:#000;font-weight:400;">Audio</div>
<svg class="a" style="left:817.3px;top:430.94px" width="10.5" height="9.5" viewBox="0 0 10.5 9.5"><path d="M0.6 3.2 V1.3 Q0.6 0.4 1.5 0.4 H4 Q4.9 0.4 4.9 1.3 V2.4" fill="#ececec" stroke="#454b50" stroke-width="0.9"/><rect x="0.2" y="2.3" width="10" height="7" rx="1" fill="#525d66"/><path d="M5 4.2 H9.6" stroke="#e2e6ea" stroke-width="0.9"/><path d="M0.7 4.6 H4.6" stroke="#9aa6b4" stroke-width="0.8"/><path d="M0.8 6.3 H9.6" stroke="#5e6973" stroke-width="0.6"/></svg>
<div class="t" style="left:830.60px;top:432.05px;font-size:9.2px;line-height:9.2px;color:#000;font-weight:400;">game</div>
<svg class="a" style="left:817.3px;top:442.56px" width="10.5" height="9.5" viewBox="0 0 10.5 9.5"><path d="M0.6 3.2 V1.3 Q0.6 0.4 1.5 0.4 H4 Q4.9 0.4 4.9 1.3 V2.4" fill="#ececec" stroke="#454b50" stroke-width="0.9"/><rect x="0.2" y="2.3" width="10" height="7" rx="1" fill="#525d66"/><path d="M5 4.2 H9.6" stroke="#e2e6ea" stroke-width="0.9"/><path d="M0.7 4.6 H4.6" stroke="#9aa6b4" stroke-width="0.8"/><path d="M0.8 6.3 H9.6" stroke="#5e6973" stroke-width="0.6"/></svg>
<div class="t" style="left:830.60px;top:443.67px;font-size:9.2px;line-height:9.2px;color:#000;font-weight:400;">Interface</div>
<svg class="a" style="left:817.3px;top:454.18px" width="10.5" height="9.5" viewBox="0 0 10.5 9.5"><path d="M0.6 3.2 V1.3 Q0.6 0.4 1.5 0.4 H4 Q4.9 0.4 4.9 1.3 V2.4" fill="#ececec" stroke="#454b50" stroke-width="0.9"/><rect x="0.2" y="2.3" width="10" height="7" rx="1" fill="#525d66"/><path d="M5 4.2 H9.6" stroke="#e2e6ea" stroke-width="0.9"/><path d="M0.7 4.6 H4.6" stroke="#9aa6b4" stroke-width="0.8"/><path d="M0.8 6.3 H9.6" stroke="#5e6973" stroke-width="0.6"/></svg>
<div class="t" style="left:830.60px;top:455.29px;font-size:9.2px;line-height:9.2px;color:#000;font-weight:400;">Materiais</div>
<svg class="a" style="left:817.3px;top:465.79999999999995px" width="10.5" height="9.5" viewBox="0 0 10.5 9.5"><path d="M0.6 3.2 V1.3 Q0.6 0.4 1.5 0.4 H4 Q4.9 0.4 4.9 1.3 V2.4" fill="#ececec" stroke="#454b50" stroke-width="0.9"/><rect x="0.2" y="2.3" width="10" height="7" rx="1" fill="#525d66"/><path d="M5 4.2 H9.6" stroke="#e2e6ea" stroke-width="0.9"/><path d="M0.7 4.6 H4.6" stroke="#9aa6b4" stroke-width="0.8"/><path d="M0.8 6.3 H9.6" stroke="#5e6973" stroke-width="0.6"/></svg>
<div class="t" style="left:830.60px;top:466.91px;font-size:9.2px;line-height:9.2px;color:#000;font-weight:400;">Modelos3D</div>
<svg class="a" style="left:817.3px;top:477.41999999999996px" width="10.5" height="9.5" viewBox="0 0 10.5 9.5"><path d="M0.6 3.2 V1.3 Q0.6 0.4 1.5 0.4 H4 Q4.9 0.4 4.9 1.3 V2.4" fill="#ececec" stroke="#454b50" stroke-width="0.9"/><rect x="0.2" y="2.3" width="10" height="7" rx="1" fill="#525d66"/><path d="M5 4.2 H9.6" stroke="#e2e6ea" stroke-width="0.9"/><path d="M0.7 4.6 H4.6" stroke="#9aa6b4" stroke-width="0.8"/><path d="M0.8 6.3 H9.6" stroke="#5e6973" stroke-width="0.6"/></svg>
<div class="t" style="left:830.60px;top:478.53px;font-size:9.2px;line-height:9.2px;color:#000;font-weight:400;">Prefabs</div>
<svg class="a" style="left:817.3px;top:489.03999999999996px" width="10.5" height="9.5" viewBox="0 0 10.5 9.5"><path d="M0.6 3.2 V1.3 Q0.6 0.4 1.5 0.4 H4 Q4.9 0.4 4.9 1.3 V2.4" fill="#ececec" stroke="#454b50" stroke-width="0.9"/><rect x="0.2" y="2.3" width="10" height="7" rx="1" fill="#525d66"/><path d="M5 4.2 H9.6" stroke="#e2e6ea" stroke-width="0.9"/><path d="M0.7 4.6 H4.6" stroke="#9aa6b4" stroke-width="0.8"/><path d="M0.8 6.3 H9.6" stroke="#5e6973" stroke-width="0.6"/></svg>
<div class="t" style="left:830.60px;top:490.15px;font-size:9.2px;line-height:9.2px;color:#000;font-weight:400;">Scripts</div>
<svg class="a" style="left:817.3px;top:500.65999999999997px" width="10.5" height="9.5" viewBox="0 0 10.5 9.5"><path d="M0.6 3.2 V1.3 Q0.6 0.4 1.5 0.4 H4 Q4.9 0.4 4.9 1.3 V2.4" fill="#ececec" stroke="#454b50" stroke-width="0.9"/><rect x="0.2" y="2.3" width="10" height="7" rx="1" fill="#525d66"/><path d="M5 4.2 H9.6" stroke="#e2e6ea" stroke-width="0.9"/><path d="M0.7 4.6 H4.6" stroke="#9aa6b4" stroke-width="0.8"/><path d="M0.8 6.3 H9.6" stroke="#5e6973" stroke-width="0.6"/></svg>
<div class="t" style="left:830.60px;top:501.77px;font-size:9.2px;line-height:9.2px;color:#000;font-weight:400;">Texturas</div>
<svg class="a" style="left:818px;top:511.78px" width="10" height="10" viewBox="0 0 10 10"><path d="M0.8 5 L7.3 1.1 Q8.7 0.4 9.1 1.8 Q9.9 5 9.1 8.2 Q8.7 9.6 7.3 8.9 Z" fill="#fff" stroke="#111" stroke-width="1.25" stroke-linejoin="round"/><path d="M5 5 L8.4 1.3 M5 5 L8.4 8.7 M5 5 H0.8" stroke="#111" stroke-width="1"/></svg>
<div class="t" style="left:830.60px;top:513.39px;font-size:9.2px;line-height:9.2px;color:#000;font-weight:400;">game</div>
<svg class="a" style="left:818px;top:523.4px" width="10" height="10" viewBox="0 0 10 10"><path d="M0.8 5 L7.3 1.1 Q8.7 0.4 9.1 1.8 Q9.9 5 9.1 8.2 Q8.7 9.6 7.3 8.9 Z" fill="#fff" stroke="#111" stroke-width="1.25" stroke-linejoin="round"/><path d="M5 5 L8.4 1.3 M5 5 L8.4 8.7 M5 5 H0.8" stroke="#111" stroke-width="1"/></svg>
<div class="t" style="left:830.60px;top:525.01px;font-size:9.2px;line-height:9.2px;color:#000;font-weight:400;">menu</div>
<div class="a" style="left:805px;top:729px;width:270px;height:13px;background:linear-gradient(#e9e9e9,#e2e2e2);border-top:1px solid #b5b5b5"></div>
<div class="a" style="left:1026px;top:735px;width:36px;height:2px;background:#777;border-radius:1px"></div>
<svg class="a" style="left:1020.5px;top:731px" width="9" height="9" viewBox="0 0 9 9"><circle cx="4.5" cy="4.5" r="3.6" fill="#f2f2f2" stroke="#666" stroke-width="0.9"/></svg>
<div class="a" style="left:1074px;top:367px;width:1px;height:375px;background:#8a8a8a"></div>
<div class="a" style="left:725px;top:741px;width:350px;height:1px;background:#8a8a8a"></div>
<div class="tab" style="left:1077px;top:55px;width:71px;height:12px"></div>
<svg class="a" style="left:1083px;top:57.3px" width="8" height="8" viewBox="0 0 8 8"><circle cx="3.8" cy="3.8" r="3.7" fill="#333"/><rect x="3" y="3.2" width="1.6" height="3" fill="#fff"/><circle cx="3.8" cy="1.9" r="0.8" fill="#fff"/></svg>
<div class="t" style="left:1094.20px;top:57.11px;font-size:9.2px;line-height:9.2px;color:#000;font-weight:400;">Inspector</div>
<svg class="a" style="left:1376px;top:58.8px" width="6" height="7" viewBox="0 0 6 7"><path d="M1.3 3 V1.8 A1.6 1.6 0 0 1 4.5 1.8" fill="none" stroke="#555" stroke-width="1"/><rect x="0.3" y="3" width="5.2" height="4" fill="#555"/></svg>
<svg class="a" style="left:1386px;top:62px" width="11" height="5" viewBox="0 0 11 5"><path d="M0.3 1.2 H2.9 L1.6 2.7 Z" fill="#444"/><rect x="4" y="0.2" width="6.3" height="1.3" fill="#555"/><rect x="4" y="3" width="6.3" height="1.3" fill="#555"/></svg>
<div class="a" style="left:1077px;top:66px;width:323px;height:676px;background:#c2c2c2;border-top:1px solid #a0a0a0"></div>
<div class="a" style="left:1076px;top:55px;width:1px;height:687px;background:#8e8e8e"></div>
<div class="a" style="left:1077px;top:741px;width:323px;height:1px;background:#8a8a8a"></div>
<svg class="a" style="left:2px;top:745.5px" width="11" height="10" viewBox="0 0 11 10"><path d="M5.5 0.5 L10.5 9.5 H0.5 Z" fill="#f3c612" stroke="#8a6d00" stroke-width="0.8" stroke-linejoin="round"/><rect x="5" y="3.5" width="1" height="3.5" fill="#222"/><rect x="5" y="7.6" width="1" height="1" fill="#222"/></svg>
<div class="t" style="left:14.90px;top:747.30px;font-size:9.45px;line-height:9.45px;color:#1a1a1a;font-weight:400;">File 'Animacoes' has animation import warnings. See Import Messages in Animation Import Settings for more details.</div>
</body></html>
